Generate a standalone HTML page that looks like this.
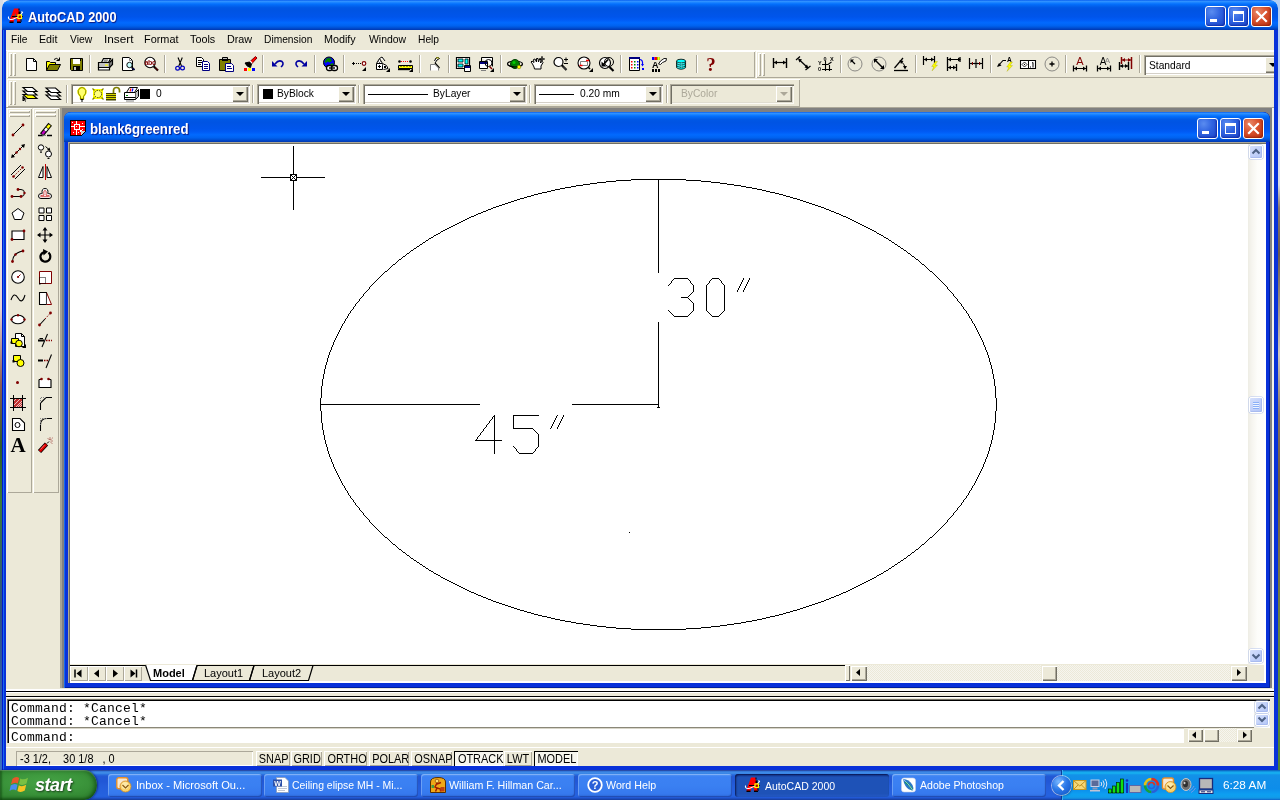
<!DOCTYPE html>
<html>
<head>
<meta charset="utf-8">
<title>AutoCAD 2000</title>
<style>
*{box-sizing:border-box;margin:0;padding:0}
html,body{width:1280px;height:800px;overflow:hidden}
body{position:relative;background:#9fb0c8;font-family:"Liberation Sans",sans-serif;font-size:11px;color:#000}
.abs{position:absolute}
/* desktop slivers */
#deskL{left:0;top:0;width:3px;height:770px;background:linear-gradient(to bottom,#d8dde6 0,#c9ced8 12%,#eef0f4 25%,#e6d3d6 40%,#8a5a52 50%,#2e5a2a 58%,#3c7a3a 65%,#2d4f8a 80%,#3a6ec0 100%)}
#deskR{left:1277px;top:0;width:3px;height:770px;background:linear-gradient(to bottom,#b3cef5 0,#b8d0f2 12%,#dfe4ee 16%,#d8dce4 24%,#8a7a70 27%,#6a5a50 33%,#a09488 40%,#cfc8c0 46%,#8a7460 54%,#6f5a42 62%,#7a7048 72%,#6a8440 82%,#5a8a3a 90%,#4f8236 100%)}
/* main window */
#win{left:2px;top:0;width:1276px;height:770px;background:#ece9d8;border-radius:8px 8px 0 0;overflow:hidden;will-change:transform}
#winframe{left:0;top:30px;width:1276px;height:740px;border:4px solid #0831d9;border-top:0;pointer-events:none}
#winframe:before{content:'';position:absolute;left:-4px;top:0;width:1px;height:740px;background:#0019cf}
#winframe:after{content:'';position:absolute;left:-3px;top:0;width:1274px;height:739px;border:1px solid #166aee;border-top:0;border-right-color:#0831d9;border-bottom-color:#0831d9;box-shadow:1px 1px 0 #00138c}
.tbar{background:linear-gradient(to bottom,#0058ee 0%,#3593ff 4%,#288eff 6%,#127dff 10%,#036ffc 14%,#0262ee 20%,#0057e5 26%,#0054e3 34%,#0055eb 56%,#005bf5 66%,#026afe 76%,#0062ef 86%,#0052d6 92%,#0044c4 96%,#0038b0 100%)}
#title{left:0;top:0;width:1276px;height:30px;border-radius:8px 8px 0 0}
.ttext{transform:scaleX(.91);transform-origin:0 0;color:#fff;font-weight:bold;font-size:14px;line-height:16px;text-shadow:1px 1px 1px #0a1883;white-space:nowrap}
.cbtn{width:21px;height:21px;border:1px solid #fff;border-radius:3px;background:radial-gradient(circle at 30% 25%,#5a8cf0 0,#2f63e0 45%,#1c45c8 100%);box-shadow:inset -1px -1px 2px rgba(0,20,140,.6)}
.cbtn.x{background:radial-gradient(circle at 30% 25%,#e8896a 0,#d8502c 45%,#b8300e 100%);box-shadow:inset -1px -1px 2px rgba(120,20,0,.6)}
#menubar{left:4px;top:30px;width:1268px;height:20px;background:#ece9d8}
.mi{top:33px;transform-origin:0 0;font-size:11px;white-space:nowrap}
.face{background:#ece9d8}
.tb{background:#ece9d8;box-shadow:inset 1px 1px 0 #fff,inset -1px -1px 0 #aca899}
.sep{width:2px;height:18px;border-left:1px solid #aca899;border-right:1px solid #fff}
.gripv{width:3px;height:22px;box-shadow:inset 1px 1px 0 #fff,inset -1px -1px 0 #aca899}
.griph{height:3px;width:22px;box-shadow:inset 1px 1px 0 #fff,inset -1px -1px 0 #aca899}
.combo{background:#fff;height:20px;box-shadow:inset 1px 1px 0 #aca899,inset 2px 2px 0 #716f64,inset -1px -1px 0 #fff,inset -2px -2px 0 #d4d0c8;font-size:11px;white-space:nowrap}
.combo.dis{background:#ece9d8;color:#aca899;box-shadow:inset 1px 1px 0 #aca899,inset 2px 2px 0 #716f64,inset -1px -1px 0 #fbfaf4,inset -2px -2px 0 #e0ddd0}
.dd{width:16px;height:16px;background:#ece9d8;box-shadow:inset 1px 1px 0 #fff,inset -1px -1px 0 #716f64,inset -2px -2px 0 #aca899}
.dd:after{content:"";position:absolute;left:4px;top:6px;border:4px solid transparent;border-top:4px solid #000;border-bottom:0}
.dd.dis:after{border-top-color:#aca899}
svg{position:absolute;overflow:visible}
.xsb{width:14px;height:14px;border:1px solid #fff;border-radius:2px;background:linear-gradient(135deg,#d6e0fb 0,#c3d2fa 50%,#b5c7f6 100%);box-shadow:0 0 0 0.5px #b4c4ee,inset -1px -1px 1px #a7baee}
.nb{width:18px;height:15px;background:#ece9d8;box-shadow:inset 1px 1px 0 #fff,inset -1px -1px 0 #aca899}
.cb{width:17px;height:16px;background:#ece9d8;box-shadow:inset 1px 1px 0 #ece9d8,inset 2px 2px 0 #fff,inset -1px -1px 0 #716f64,inset -2px -2px 0 #aca899}
.dith{background-color:#f6f5ef;background-image:linear-gradient(45deg,#ece9d8 25%,transparent 25%,transparent 75%,#ece9d8 75%),linear-gradient(45deg,#ece9d8 25%,transparent 25%,transparent 75%,#ece9d8 75%);background-size:2px 2px;background-position:0 0,1px 1px}
.cmd{font-family:"Liberation Mono",monospace;font-size:13px;line-height:13px;white-space:pre;letter-spacing:0.2px;transform:scaleX(1.0);transform-origin:0 0}
.st{font-size:13px;line-height:14px;white-space:nowrap;transform:scaleX(.84);transform-origin:0 0}
.sb{top:751px;height:15px;font-size:13px;line-height:16px;text-align:center;white-space:nowrap;box-shadow:inset 1px 1px 0 #fff,inset -1px -1px 0 #aca899}
.sb i{display:block;font-style:normal;transform:scaleX(.84)}
.sb.on{background:#f7f6ef;box-shadow:inset 1px 1px 0 #000,inset -1px -1px 0 #fff}
.tk{top:4px;width:154px;height:23px;border-radius:3px;background:linear-gradient(to bottom,#5a9af4 0,#3c81f3 12%,#3a80f2 50%,#3679ee 85%,#2f6fe0 100%);box-shadow:inset 1px 1px 0 rgba(255,255,255,.25),inset -1px -1px 1px rgba(0,0,80,.35);color:#fff;font-size:11px;line-height:22px;white-space:nowrap;overflow:hidden}
.tk span{position:absolute;left:28px;top:0;transform-origin:0 0}
.tk.act span{left:30px;top:1px}
.tk.act{background:linear-gradient(to bottom,#163c9c 0,#1e52b7 15%,#1e52b7 85%,#2459c4 100%);box-shadow:inset 1px 1px 2px rgba(0,0,40,.7)}
.xsb svg{left:-1px;top:-1px}
.ct{position:absolute;top:3px;transform:scaleX(.93);transform-origin:0 0}
.sw{position:absolute;top:5px;width:10px;height:10px;background:#000}
#mdi{left:58px;top:108px;width:1214px;height:580px;background:#808080}
</style>
</head>
<body>
<div class="abs" style="left:0;top:0;width:12px;height:12px;background:#e4e9f1"></div><div class="abs" style="left:1268px;top:0;width:12px;height:12px;background:#b3cef5"></div>
<div id="deskL" class="abs"></div>
<div id="deskR" class="abs"></div>

<div id="win" class="abs">
  <div id="title" class="abs tbar"></div>
  <svg style="left:6px;top:8px" width="16" height="16" viewBox="0 0 16 16">
    <path d="M6 .500H10.500L11 3.500L12 4V8L12.500 8.500V14.500H9V11H6.500L5.500 14.500H1.500L2.500 9.500L4 6Z" fill="#f00"/>
    <path d="M1.500 13.500H5.500V15H1.500ZM9 13.500H13V15H9ZM12.500 10V14H13.500V10ZM10.500 .500H11.500V2.500H10.500ZM10.500 3.500H12.500V6H10.500Z" fill="#000"/>
    <path d="M7.300 5L8 9H6.300Z" fill="#088"/>
    <path d="M4 8.500H15" stroke="#000" stroke-width="1"/>
    <path d="M.500 8.500Q0 11.500 3 11.500Q5 11.500 6.500 10.500Q9 9.500 10.500 9Q13 6.500 14.500 4.500L13.500 3.500" fill="none" stroke="#fff" stroke-width="1.100"/>
    <rect x="10" y="7" width="3.500" height="3.500" fill="#b00000" stroke="#ff0" stroke-width="1.200"/>
  </svg>
  <div class="abs ttext" style="left:26px;top:9px">AutoCAD 2000</div>
  <div class="abs cbtn" style="left:1203px;top:6px"><svg width="19" height="19" viewBox="0 0 19 19" shape-rendering="crispEdges"><rect x="4" y="12" width="7" height="3" fill="#fff"/></svg></div>
  <div class="abs cbtn" style="left:1226px;top:6px"><svg width="19" height="19" viewBox="0 0 19 19" shape-rendering="crispEdges"><path d="M4 4H15V15H4ZM5 7V14H14V7Z" fill="#fff" fill-rule="evenodd"/></svg></div>
  <div class="abs cbtn x" style="left:1249px;top:6px"><svg width="19" height="19" viewBox="0 0 19 19"><path d="M5 5L14 14M14 5L5 14" stroke="#fff" stroke-width="2.200" stroke-linecap="square"/></svg></div>
  <div id="menubar" class="abs"></div>

  <div class="abs mi" style="left:9px;transform:scaleX(0.93)">File</div>
  <div class="abs mi" style="left:37px;transform:scaleX(0.97)">Edit</div>
  <div class="abs mi" style="left:67.5px;transform:scaleX(0.94)">View</div>
  <div class="abs mi" style="left:101.5px;transform:scaleX(1.07)">Insert</div>
  <div class="abs mi" style="left:142px;transform:scaleX(0.99)">Format</div>
  <div class="abs mi" style="left:188px;transform:scaleX(0.98)">Tools</div>
  <div class="abs mi" style="left:225px;transform:scaleX(0.98)">Draw</div>
  <div class="abs mi" style="left:262px;transform:scaleX(0.93)">Dimension</div>
  <div class="abs mi" style="left:322px;transform:scaleX(0.98)">Modify</div>
  <div class="abs mi" style="left:367px;transform:scaleX(0.95)">Window</div>
  <div class="abs mi" style="left:416px;transform:scaleX(0.93)">Help</div>
  <div class="abs" style="left:4px;top:50px;width:1268px;height:1px;background:#fff"></div>
  <div class="abs tb" style="left:5px;top:51px;width:748px;height:27px"></div>
  <div class="abs gripv" style="left:7px;top:53px;height:23px"></div><div class="abs gripv" style="left:11px;top:53px;height:23px"></div>
  <svg style="left:20.5px;top:56px" width="16" height="16" viewBox="0 0 16 16"><path d="M3.500 2.500H10.500L13.500 5.500V14.500H3.500Z" fill="#fff" stroke="#000" stroke-width="1" /><path d="M10.500 2.500V5.500H13.500" fill="none" stroke="#000" stroke-width="1" /></svg>
  <svg style="left:42.5px;top:56px" width="16" height="16" viewBox="0 0 16 16"><path d="M1.500 14.500V5.500H4.500L5.500 6.500H10.500V8.500" fill="#ff0" stroke="#000" stroke-width="1" /><path d="M1.500 14.500L4.500 8.500H15.500L12.500 14.500Z" fill="#808000" stroke="#000" stroke-width="1" /><path d="M9 3.500Q11.500 1 14 4" fill="none" stroke="#000" stroke-width="1" /><path d="M14.500 1.500V4.500H11.500" fill="none" stroke="#000" stroke-width="1" /></svg>
  <svg style="left:66px;top:56px" width="16" height="16" viewBox="0 0 16 16"><path d="M2.500 2.500H14.500V14.500H3.500L2.500 13.500Z" fill="#808000" stroke="#000" stroke-width="1" /><rect x="5" y="3" width="7" height="5" fill="#fff"/><rect x="5" y="10" width="7" height="4" fill="#000"/><rect x="6" y="11" width="2" height="3" fill="#c0c0c0"/><rect x="12" y="3" width="1" height="2" fill="#000"/></svg>
  <div class="abs sep" style="left:87px;top:55px"></div>
  <svg style="left:95px;top:56px" width="16" height="16" viewBox="0 0 16 16"><path d="M4.500 6.500L6.500 2.500H13.500L11.500 6.500" fill="#fff" stroke="#000" stroke-width="1.2" /><path d="M1.500 6.500H12.500V11.500H1.500Z" fill="#c0c0c0" stroke="#000" stroke-width="1.2" /><path d="M12.500 6.500L15.500 3.500V8.500L12.500 11.500" fill="#808080" stroke="#000" stroke-width="1.2" /><path d="M1.500 11.500H12.500V14H1.500Z" fill="#fff" stroke="#000" stroke-width="1.2" /><rect x="8" y="8.5" width="3" height="1.2" fill="#ff0"/><path d="M7 4H11M6.500 5.200H10.500" fill="none" stroke="#000" stroke-width="0.6" /></svg>
  <svg style="left:118px;top:56px" width="16" height="16" viewBox="0 0 16 16"><path d="M2.500 1.500H9.500L12.500 4.500V14.500H2.500Z" fill="#fff" stroke="#000" stroke-width="1" /><path d="M9.500 1.500V4.500H12.500" fill="none" stroke="#808080" stroke-width="1" /><circle cx="9.500" cy="9" r="2.700" fill="#c8ffff" stroke="#000" stroke-width=".900"/><path d="M11.600 11.200L14.500 14" fill="none" stroke="#000" stroke-width="1.8" /><path d="M12.500 12L14.500 14" fill="none" stroke="#000080" stroke-width="1" /></svg>
  <svg style="left:140.5px;top:56px" width="16" height="16" viewBox="0 0 16 16"><circle cx="7" cy="6.500" r="5.200" fill="#fff" stroke="#000" stroke-width="1.100"/><text x="7" y="9" font-family="Liberation Sans" font-size="7" font-weight="bold" fill="#800000" text-anchor="middle" letter-spacing="-.4">abc</text><path d="M10.800 10.500L15 14.500" fill="none" stroke="#000" stroke-width="2.2" /><path d="M12 11.500L15 14.300" fill="none" stroke="#800000" stroke-width="1" /></svg>
  <div class="abs sep" style="left:162px;top:55px"></div>
  <svg style="left:169.5px;top:56px" width="16" height="16" viewBox="0 0 16 16"><path d="M6 1.500L9.500 10M10.300 1.500L6.800 10" fill="none" stroke="#000" stroke-width="1.1" /><circle cx="5.600" cy="12.300" r="1.900" fill="none" stroke="#0000c0" stroke-width="1.200"/><circle cx="10.500" cy="12" r="1.900" fill="none" stroke="#0000c0" stroke-width="1.200"/></svg>
  <svg style="left:192.5px;top:56px" width="16" height="16" viewBox="0 0 16 16"><path d="M1.500 1.500H6.500L8.500 3.500V10.500H1.500Z" fill="#fff" stroke="#000" stroke-width="1" /><path d="M3 4.500H7M3 6.500H7M3 8.500H6" fill="none" stroke="#000" stroke-width="1" /><path d="M7.500 5.500H12.500L14.500 7.500V14.500H7.500Z" fill="#fff" stroke="#000080" stroke-width="1" /><path d="M9 8.500H13M9 10.500H13M9 12.500H13" fill="none" stroke="#000080" stroke-width="1" /></svg>
  <svg style="left:215.5px;top:56px" width="16" height="16" viewBox="0 0 16 16"><path d="M1.500 3.500H12.500V14.500H1.500Z" fill="#808000" stroke="#000" stroke-width="1" /><path d="M4.500 3.500V1.500H9.500V3.500" fill="#c0c0c0" stroke="#000" stroke-width="1" /><rect x="4" y="3" width="6" height="2" fill="#000"/><path d="M7.500 7.500H13.500L15.500 9.500V15.500H7.500Z" fill="#fff" stroke="#000080" stroke-width="1" /><path d="M9 10.500H13M9 12.500H14" fill="none" stroke="#000080" stroke-width="1" /></svg>
  <svg style="left:239px;top:56px" width="16" height="16" viewBox="0 0 16 16"><path d="M14.500 .500L16 2L10.500 8L8.500 6Z" fill="#f00" stroke="#800000" stroke-width="1" /><path d="M9 5L11 7.500" fill="none" stroke="#fff" stroke-width="1.5" /><path d="M4 7L8.500 6L10.500 8L9.500 11.500Q6 11 4 7Z" fill="#000" stroke="#000" stroke-width="1" /><rect x="3" y="12" width="3" height="3" fill="#f00"/><rect x="7" y="12" width="3" height="3" fill="#ff0"/><rect x="11" y="12" width="3" height="3" fill="#00f"/></svg>
  <div class="abs sep" style="left:260px;top:55px"></div>
  <svg style="left:268px;top:56px" width="16" height="16" viewBox="0 0 16 16"><path d="M5 8Q8.500 3.500 12 5.500Q14.500 8 11 11" fill="none" stroke="#0000a0" stroke-width="1.6" /><path d="M2 5V10.500H7.500Z" fill="#0000a0" stroke="none" stroke-width="1" /></svg>
  <svg style="left:291px;top:56px" width="16" height="16" viewBox="0 0 16 16"><path d="M11 8Q7.500 3.500 4 5.500Q1.500 8 5 11" fill="none" stroke="#0000a0" stroke-width="1.6" /><path d="M14 5V10.500H8.500Z" fill="#0000a0" stroke="none" stroke-width="1" /></svg>
  <div class="abs sep" style="left:312px;top:55px"></div>
  <svg style="left:320px;top:56px" width="16" height="16" viewBox="0 0 16 16"><circle cx="7" cy="6.500" r="5.500" fill="#00f" stroke="#000"/><path d="M4 3Q6 1.500 9 2.500L10 5L7.500 6.500L5.500 5.500L4 7L2.500 6Z" fill="#008000" stroke="none" stroke-width="1" /><path d="M8 8L11 7L11.500 10L9 11.500Z" fill="#008000" stroke="none" stroke-width="1" /><rect x="4.500" y="9.500" width="6" height="5" rx="2.500" fill="#fff" stroke="#000" stroke-width="1.300"/><rect x="9.500" y="9.500" width="6" height="5" rx="2.500" fill="#fff" stroke="#000" stroke-width="1.300"/><path d="M7 12H13" fill="none" stroke="#000" stroke-width="1.4" /></svg>
  <div class="abs sep" style="left:341px;top:55px"></div>
  <svg style="left:349px;top:56px" width="16" height="16" viewBox="0 0 16 16"><path d="M1 7.500H4M2.500 6V9" fill="none" stroke="#000" stroke-width="1" /><path d="M5 7.500H11" fill="none" stroke="#000" stroke-width="1" stroke-dasharray="1 1"/><circle cx="13" cy="7.500" r="1.800" fill="#fff" stroke="#800000" stroke-width="1.200"/><path d="M15 11V15H11Z" fill="#000"/></svg>
  <svg style="left:372px;top:56px" width="16" height="16" viewBox="0 0 16 16"><path d="M2.500 7.500L5.500 2.500L8.500 7.500" fill="#fff" stroke="#000" stroke-width="1" /><path d="M5.500 2.500L8 1L11 5" fill="#fff" stroke="#000" stroke-width="1" /><path d="M2.500 7.500H8.500V13.500H2.500Z" fill="#fff" stroke="#000" stroke-width="1" /><path d="M8.500 7.500L12.500 9.500L14 12.500L9.500 13.500" fill="#fff" stroke="#000" stroke-width="1" /><path d="M4 10.500H7M5.500 9V12" fill="none" stroke="#000" stroke-width="1" /><path d="M10 10L12 12M12 10L10 12" fill="none" stroke="#000" stroke-width="1" /><path d="M4.500 5.500L5.500 6.500L6.500 5.500" fill="none" stroke="#000" stroke-width="0.8" /><path d="M16 12V16H12Z" fill="#000"/></svg>
  <svg style="left:395px;top:56px" width="16" height="16" viewBox="0 0 16 16"><circle cx="2.500" cy="5.500" r="1.300" fill="#000"/><circle cx="13.500" cy="5.500" r="1.300" fill="#000"/><path d="M4 5.500H12" fill="none" stroke="#f00" stroke-width="1" stroke-dasharray="1 1"/><path d="M1.500 9.500H15.500V12.500H1.500Z" fill="#ff0" stroke="#000" stroke-width="1" /><path d="M1 13.500H13" fill="none" stroke="#000" stroke-width="1.4" /><path d="M4 9.500V11M7 9.500V11M10 9.500V11M13 9.500V11" fill="none" stroke="#000" stroke-width="0.8" /><path d="M16 12V16H12Z" fill="#000"/></svg>
  <div class="abs sep" style="left:417px;top:55px"></div>
  <svg style="left:425px;top:56px" width="16" height="16" viewBox="0 0 16 16"><path d="M7.500 5L9 2L11 1.500L12.500 2.500L10 4L8 7" fill="#fff" stroke="#000" stroke-width="1" /><path d="M9 2L11 1.500L12 2.500" fill="#ff0" stroke="#808000" stroke-width="1" /><path d="M8 7L12.500 12" fill="none" stroke="#000" stroke-width="1.2" /><path d="M3.500 14.500V8.500H8L11.500 12V14.500" fill="#fff" stroke="#808080" stroke-width="1" /></svg>
  <div class="abs sep" style="left:446px;top:55px"></div>
  <svg style="left:452.5px;top:56px" width="16" height="16" viewBox="0 0 16 16"><path d="M1.500 1.500H14.500V12.500H1.500Z" fill="#fff" stroke="#000" stroke-width="1.2" /><rect x="3" y="3" width="5" height="3" fill="#0ff"/><rect x="3" y="8" width="5" height="3" fill="#0ff"/><rect x="10" y="3" width="3" height="5" fill="#0ff"/><path d="M3 3H8V6H3ZM3 8H8V11H3ZM10 3H13V8H10Z" fill="none" stroke="#000" stroke-width="0.8" /><path d="M9.500 9.500H15.500V15.500H9.500Z" fill="#fff" stroke="#000" stroke-width="1" /><rect x="10" y="10" width="5" height="2" fill="#000080"/></svg>
  <svg style="left:476px;top:56px" width="16" height="16" viewBox="0 0 16 16"><path d="M3.500 1.500H14.500V10.500" fill="#fff" stroke="#000" stroke-width="1" /><path d="M3.500 1.500V5" fill="none" stroke="#000" stroke-width="1" /><path d="M1.500 5.500H9.500V12.500H1.500Z" fill="#fff" stroke="#000" stroke-width="1" /><rect x="2" y="6" width="7" height="2" fill="#000080"/><circle cx="10.500" cy="7" r="3.500" fill="none" stroke="#000"/><path d="M3 14.500H8" fill="none" stroke="#808080" stroke-width="1" /><path d="M11.500 10.500L14 13" fill="none" stroke="#800000" stroke-width="1.4" /><path d="M16 12V16H12Z" fill="#000"/></svg>
  <div class="abs sep" style="left:498px;top:55px"></div>
  <svg style="left:505px;top:56px" width="16" height="16" viewBox="0 0 16 16"><ellipse cx="8" cy="8" rx="7.500" ry="2.800" fill="none" stroke="#000" stroke-width="1.200"/><circle cx="8" cy="8" r="4.500" fill="#008000" stroke="#004000"/><circle cx="7" cy="6.500" r="1.500" fill="#0c0"/><path d="M1 9Q8 13 15 9" fill="none" stroke="#000" stroke-width="1.2" /><circle cx="12" cy="11" r="1.800" fill="#ff0" stroke="#808000" stroke-width=".6"/></svg>
  <svg style="left:528px;top:56px" width="16" height="16" viewBox="0 0 16 16"><path d="M2.500 8L1 6L2 5L4 6.500L3.500 3.500L5 3L6.500 6L6.500 2.500L8 2.500L8.500 6L9.500 3L11 3.500L10.500 7L12 5.500L13 6.500L11 10L11 13H4.500L4 11Z" fill="#fff" stroke="#000" stroke-width="1" /><path d="M12 .500V5.500M9.500 3H14.500" fill="none" stroke="#000" stroke-width="1" /><path d="M12 0L11 1.500H13ZM12 6L11 4.500H13ZM9 3L10.500 2V4ZM15 3L13.500 2V4Z" fill="#000" stroke="none" stroke-width="1" /></svg>
  <svg style="left:551px;top:56px" width="16" height="16" viewBox="0 0 16 16"><circle cx="5.500" cy="6" r="4.500" fill="#fff" stroke="#000" stroke-width="1.200"/><path d="M8.800 9.300L13.500 14" fill="none" stroke="#000" stroke-width="2.2" /><path d="M10 10.500L13.300 13.800" fill="none" stroke="#808080" stroke-width="0.8" /><path d="M11 3.500H15M13 1.500V5.500M11 7.500H15" fill="none" stroke="#000" stroke-width="1" /></svg>
  <svg style="left:575px;top:56px" width="16" height="16" viewBox="0 0 16 16"><circle cx="7" cy="7" r="6" fill="#fff" stroke="#000" stroke-width="1.100"/><path d="M3.500 5.500H10.500V9.500H3.500Z" fill="none" stroke="#808080" stroke-width="1" /><path d="M2.500 9.500H5.500M9 4.500H12" fill="none" stroke="#f00" stroke-width="1.5" /><path d="M11.500 11.500L13 13" fill="none" stroke="#000" stroke-width="1.6" /><path d="M16 12V16H12Z" fill="#000"/></svg>
  <svg style="left:597px;top:56px" width="16" height="16" viewBox="0 0 16 16"><circle cx="6" cy="7" r="5.500" fill="#fff" stroke="#000" stroke-width="1.200"/><circle cx="10" cy="6" r="4.500" fill="none" stroke="#000" stroke-width="1"/><path d="M9 3.500L4 9" fill="none" stroke="#000" stroke-width="1.8" /><path d="M2.500 5.500V10.500H7.500Z" fill="#000" stroke="none" stroke-width="1" /><path d="M10.500 11L14.500 15" fill="none" stroke="#000" stroke-width="2.2" /></svg>
  <div class="abs sep" style="left:618px;top:55px"></div>
  <svg style="left:626px;top:56px" width="16" height="16" viewBox="0 0 16 16"><path d="M1.500 1.500H11.500V14.500H1.500Z" fill="#fff" stroke="#000" stroke-width="1" /><rect x="1" y="1" width="11" height="2" fill="#000080"/><rect x="3" y="5" width="1.5" height="1.5" fill="#f00"/><rect x="6" y="5" width="1.5" height="1.5" fill="#008000"/><rect x="9" y="5" width="1.5" height="1.5" fill="#00f"/><rect x="3" y="8" width="1.5" height="1.5" fill="#f00"/><rect x="6" y="8" width="1.5" height="1.5" fill="#008000"/><rect x="9" y="8" width="1.5" height="1.5" fill="#00f"/><rect x="3" y="11" width="1.5" height="1.5" fill="#f00"/><rect x="6" y="11" width="1.5" height="1.5" fill="#008000"/><rect x="9" y="11" width="1.5" height="1.5" fill="#00f"/><path d="M12 3.500Q15 4 14.500 8" fill="none" stroke="#00f" stroke-width="1.2" /><path d="M13 8H16L14.500 10.500Z" fill="#00f" stroke="none" stroke-width="1" /><rect x="14" y="12" width="2" height="2" fill="#00f"/></svg>
  <svg style="left:649px;top:56px" width="16" height="16" viewBox="0 0 16 16"><rect x="1" y="1" width="2.5" height="3" fill="#00f"/><rect x="3.5" y="1" width="2.5" height="3" fill="#f00"/><rect x="6" y="1" width="2.5" height="3" fill="#008000"/><rect x="6.5" y="1" width="2" height="3" fill="#ff0"/><text x="1" y="11.500" font-family="Liberation Sans" font-size="9" font-weight="bold" fill="#000">A</text><rect x="1" y="13" width="2" height="3" fill="#000"/><rect x="4" y="13" width="2" height="3" fill="#000"/><rect x="7" y="13" width="2" height="3" fill="#000"/><path d="M7.500 8L9.500 5L13 2.500L15.500 2.500L15 5L11.500 6.500L9.500 8.500Z" fill="#fff" stroke="#000" stroke-width="0.9" /></svg>
  <svg style="left:671px;top:56px" width="16" height="16" viewBox="0 0 16 16"><g transform="translate(1.500,1.800) scale(.82)"><path d="M2.500 4V12Q8 16 13.500 12V4" fill="#0ff" stroke="#000" stroke-width="1" /><ellipse cx="8" cy="4" rx="5.500" ry="2.300" fill="#0ff" stroke="#000"/><path d="M2.500 7Q8 11 13.500 7M2.500 9.700Q8 13.700 13.500 9.700" fill="none" stroke="#000" stroke-width="1" /><path d="M4 6.500H12M4 9H12M4 11.500H12" fill="none" stroke="#fff" stroke-width="0.8" stroke-dasharray="1 1"/></g></svg>
  <div class="abs sep" style="left:694px;top:55px"></div>
  <svg style="left:700.5px;top:56px" width="16" height="16" viewBox="0 0 16 16"><text x="8" y="15" font-family="Liberation Serif" font-size="19" font-weight="bold" fill="#800000" text-anchor="middle">?</text></svg>
  <div class="abs tb" style="left:754px;top:51px;width:520px;height:27px"></div>
  <div class="abs gripv" style="left:756px;top:53px;height:23px"></div><div class="abs gripv" style="left:760px;top:53px;height:23px"></div>
  <svg style="left:770px;top:56px" width="16" height="16" viewBox="0 0 16 16"><path d="M1.500 2V12M14.500 2V12" fill="none" stroke="#000" stroke-width="1.4" /><path d="M2 6.500H14" fill="none" stroke="#000" stroke-width="1.2" /><path d="M2 6.500L5 4.500V8.500ZM14 6.500L11 4.500V8.500Z" fill="#000" stroke="none" stroke-width="1" /></svg>
  <svg style="left:793px;top:56px" width="16" height="16" viewBox="0 0 16 16"><path d="M1 4L5 .500M10.500 14L15.500 10" fill="none" stroke="#000" stroke-width="1.2" /><path d="M4 3.500L12.500 11.500" fill="none" stroke="#000" stroke-width="1.3" /><path d="M3 2.500L7 3.500L4.500 6.500ZM13.500 12.500L9.500 11.500L12 8.500Z" fill="#000" stroke="none" stroke-width="1" /></svg>
  <svg style="left:816px;top:56px" width="16" height="16" viewBox="0 0 16 16"><text x="5.500" y="4.500" font-family="Liberation Sans" font-size="5.500" font-weight="bold" fill="#000">0</text><text x="12" y="4.500" font-family="Liberation Sans" font-size="5.500" font-weight="bold" fill="#000">X</text><text x="0" y="9" font-family="Liberation Sans" font-size="5.500" font-weight="bold" fill="#000">Y</text><text x="0" y="15" font-family="Liberation Sans" font-size="5.500" font-weight="bold" fill="#000">0</text><path d="M4 13.500H14M7.500 5V15M11.500 9V15M4 8.500H10L13.500 6" fill="none" stroke="#000" stroke-width="1.1" /></svg>
  <div class="abs sep" style="left:838px;top:55px"></div>
  <svg style="left:845px;top:56px" width="16" height="16" viewBox="0 0 16 16"><circle cx="8" cy="8" r="7" fill="none" stroke="#606060" stroke-width=".700"/><path d="M8 8L4.500 4.500" fill="none" stroke="#000" stroke-width="1.2" /><path d="M3.500 3.500H7L3.500 7Z" fill="#000" stroke="none" stroke-width="1" /></svg>
  <svg style="left:868.5px;top:56px" width="16" height="16" viewBox="0 0 16 16"><circle cx="8" cy="8" r="7" fill="none" stroke="#606060" stroke-width=".700"/><path d="M4.500 4.500L11.500 11.500" fill="none" stroke="#000" stroke-width="1.4" /><path d="M3 3H7L3 7ZM13 13H9L13 9Z" fill="#000" stroke="none" stroke-width="1" /></svg>
  <svg style="left:891px;top:56px" width="16" height="16" viewBox="0 0 16 16"><path d="M1 14.500H15" fill="none" stroke="#000" stroke-width="1.3" /><path d="M1.500 12L10 2" fill="none" stroke="#000" stroke-width="1.2" /><path d="M8 5.500Q12 8 12 12" fill="none" stroke="#000" stroke-width="1" /><path d="M6.500 4L10.500 5L8 8ZM12 13.500L10 10H14Z" fill="#000" stroke="none" stroke-width="1" /></svg>
  <div class="abs sep" style="left:913px;top:55px"></div>
  <svg style="left:920px;top:56px" width="16" height="16" viewBox="0 0 16 16"><path d="M1.500 0V9M12.500 0V7" fill="none" stroke="#000" stroke-width="1.2" /><path d="M2 3.500H12" fill="none" stroke="#000" stroke-width="1" /><path d="M2 3.500L5 1.500V5.500ZM12 3.500L9 1.500V5.500Z" fill="#000" stroke="none" stroke-width="1" /><g transform="translate(9,5.500) scale(.72)"><path d="M6 0L1 7H4L1.500 13L9 5H5.500L9 0Z" fill="#ff0" stroke="#a0a000" stroke-width=".500"/></g></svg>
  <svg style="left:943.5px;top:56px" width="16" height="16" viewBox="0 0 16 16"><path d="M1.500 1V15M10.500 8V15M14 1V6" fill="none" stroke="#000" stroke-width="1.3" /><path d="M2 3.500H14M2 11.500H10" fill="none" stroke="#000" stroke-width="1.1" /><path d="M2 3.500L5 1.500V5.500ZM15 3.500L12 1.500V5.500ZM2 11.500L5 9.500V13.500ZM10 11.500L7 9.500V13.500Z" fill="#000" stroke="none" stroke-width="1" /></svg>
  <svg style="left:966px;top:56px" width="16" height="16" viewBox="0 0 16 16"><path d="M1.500 2V13M8 3V12M14.500 2V13" fill="none" stroke="#000" stroke-width="1.2" /><path d="M2 7.500H14" fill="none" stroke="#000" stroke-width="1" /><path d="M4.500 6V9M11.500 6V9" fill="none" stroke="#800000" stroke-width="1" /><path d="M2 7.500L3.500 6.500V8.500ZM7.500 7.500L6 6.500V8.500ZM8.500 7.500L10 6.500V8.500ZM14 7.500L12.500 6.500V8.500Z" fill="#000" stroke="none" stroke-width="1" /></svg>
  <div class="abs sep" style="left:988px;top:55px"></div>
  <svg style="left:995px;top:56px" width="16" height="16" viewBox="0 0 16 16"><path d="M1 10L6 4.500H9" fill="none" stroke="#000" stroke-width="1.1" /><path d="M0 11L4.500 9.500L2 7Z" fill="#000" stroke="none" stroke-width="1" /><text x="10" y="5.500" font-family="Liberation Sans" font-size="6.500" font-weight="bold" fill="#000">A</text><g transform="translate(9,6) scale(.72)"><path d="M6 0L1 7H4L1.500 13L9 5H5.500L9 0Z" fill="#ff0" stroke="#a0a000" stroke-width=".500"/></g></svg>
  <svg style="left:1018px;top:56px" width="16" height="16" viewBox="0 0 16 16"><path d="M.500 4.500H15.500V12.500H.500Z" fill="#fff" stroke="#000" stroke-width="1.1" /><path d="M8.500 4.500V12.500" fill="none" stroke="#000" stroke-width="1" /><path d="M4.500 6L7 8.500L4.500 11L2 8.500Z" fill="none" stroke="#000" stroke-width="0.8" /><rect x="4" y="8" width="1" height="1" fill="#000"/><rect x="10" y="10.5" width="1" height="1" fill="#000"/><path d="M12 7L13 6.500V11.500" fill="none" stroke="#000" stroke-width="1" /></svg>
  <svg style="left:1041.5px;top:56px" width="16" height="16" viewBox="0 0 16 16"><circle cx="8" cy="8" r="7" fill="none" stroke="#606060" stroke-width=".700"/><path d="M5.500 8H10.500M8 5.500V10.500" fill="none" stroke="#000" stroke-width="1.3" /></svg>
  <div class="abs sep" style="left:1063px;top:55px"></div>
  <svg style="left:1070px;top:56px" width="16" height="16" viewBox="0 0 16 16"><text x="8" y="9" font-family="Liberation Sans" font-size="11" fill="#800000" text-anchor="middle">A</text><path d="M1.500 9.500V15.500M14.500 9.500V15.500" fill="none" stroke="#000" stroke-width="1.3" /><path d="M2 12.500H14" fill="none" stroke="#000" stroke-width="1.1" /><path d="M2 12.500L5 10.500V14.500ZM14 12.500L11 10.500V14.500Z" fill="#000" stroke="none" stroke-width="1" /></svg>
  <svg style="left:1093.5px;top:56px" width="16" height="16" viewBox="0 0 16 16"><text x="7" y="9" font-family="Liberation Sans" font-size="10" fill="#000" text-anchor="middle">A</text><text x="11.500" y="7" font-family="Liberation Sans" font-size="8" fill="#808080" text-anchor="middle">A</text><path d="M1.500 9.500V15.500M14.500 9.500V15.500" fill="none" stroke="#000" stroke-width="1.3" /><path d="M2 12.500H14" fill="none" stroke="#000" stroke-width="1.1" /><path d="M2 12.500L5 10.500V14.500ZM14 12.500L11 10.500V14.500Z" fill="#000" stroke="none" stroke-width="1" /></svg>
  <svg style="left:1116px;top:56px" width="16" height="16" viewBox="0 0 16 16"><path d="M1.500 6V14M10.500 6V14" fill="none" stroke="#000" stroke-width="1.4" /><path d="M2 10H10" fill="none" stroke="#000" stroke-width="1" /><path d="M2 10L5 8V12ZM10 10L7 8V12Z" fill="#000" stroke="none" stroke-width="1" /><path d="M3.500 1V8M13.500 1V13" fill="none" stroke="#800000" stroke-width="1.5" /><path d="M4 4H13" fill="none" stroke="#800000" stroke-width="1.1" /><path d="M4 4L7 2V6ZM13 4L10 2V6Z" fill="#800000" stroke="none" stroke-width="1" /></svg>
  <div class="abs sep" style="left:1137px;top:55px"></div>
  <div class="abs combo" style="left:1142px;top:55px;width:140px;height:20px"><span class="ct" style="left:5px;top:4px">Standard</span></div>
  <div class="abs dd" style="left:1263px;top:57px;height:16px"></div>
  <div class="abs tb" style="left:5px;top:79px;width:793px;height:28px"></div>
  <div class="abs gripv" style="left:7px;top:81px;height:24px"></div><div class="abs gripv" style="left:11px;top:81px;height:24px"></div>
  <svg style="left:20px;top:86px" width="16" height="16" viewBox="0 0 16 16"><path d="M1 8.500H10.500L15 12.500H5.500Z" fill="#ff0" stroke="#000" stroke-width="1.1" /><path d="M1 5H10.500L15 9H5.500Z" fill="#fff" stroke="#000" stroke-width="1.1" /><path d="M1 1.500H10.500L15 5.500H5.500Z" fill="#fff" stroke="#000" stroke-width="1.1" /><path d="M1 10V15L2.500 13.500L3.500 15.500" fill="none" stroke="#000" stroke-width="1" /><path d="M1 10L4.500 13.500H1Z" fill="#000" stroke="none" stroke-width="1" /></svg>
  <svg style="left:43px;top:86px" width="16" height="16" viewBox="0 0 16 16"><path d="M1 9H10.500L15.500 13.500H6Z" fill="#fff" stroke="#000" stroke-width="1.1" /><path d="M1 5.500H10.500L15.500 10H6Z" fill="#fff" stroke="#000" stroke-width="1.1" /><path d="M1 2H10.500L15.500 6.500H6Z" fill="#fff" stroke="#000" stroke-width="1.1" /></svg>
  <div class="abs sep" style="left:64px;top:85px"></div>
  <div class="abs combo" style="left:69px;top:84px;width:179px;height:20px"><span class="ct" style="left:85px">0</span><span class="sw" style="left:69px"></span></div>
  <div class="abs dd" style="left:230px;top:86px"></div>
  <svg style="left:72px;top:86px" width="16" height="16" viewBox="0 0 16 16"><path d="M6.500 10.500Q3.500 7.500 4.200 4.500Q5.500 1.500 8 1.500Q10.500 1.500 11.800 4.500Q12.500 7.500 9.500 10.500V12.500H6.500Z" fill="#ffff70" stroke="#ff0" stroke-width="1.6" /><path d="M6.500 10.500Q3.500 7.500 4.200 4.500Q5.500 1.500 8 1.500Q10.500 1.500 11.800 4.500Q12.500 7.500 9.500 10.500V13H6.500Z" fill="none" stroke="#404000" stroke-width="0.6" /><path d="M6.500 13.500H9.500M7 15H9" fill="none" stroke="#000" stroke-width="1.1" /></svg>
  <svg style="left:87.5px;top:86px" width="16" height="16" viewBox="0 0 16 16"><rect x="3" y="3" width="10" height="10" fill="#ff0"/><circle cx="8" cy="8" r="3.600" fill="#ffff80" stroke="#404000" stroke-width="1" stroke-dasharray="1.5 1"/><path d="M2.500 2.500L4.500 4.500M11.500 11.500L13.500 13.500M13.500 2.500L11.500 4.500M4.500 11.500L2.500 13.500" fill="none" stroke="#808000" stroke-width="1.2" /></svg>
  <svg style="left:103px;top:86px" width="16" height="16" viewBox="0 0 16 16"><path d="M8.500 7V4.500Q8.500 1.500 11.500 1.500Q14.500 1.500 14.500 4.500V6.500" fill="none" stroke="#808000" stroke-width="1.7" /><rect x="1" y="7" width="10" height="7.5" fill="#404000"/><path d="M1 8.500H11M1 10.500H11M1 12.500H11" fill="none" stroke="#d8d800" stroke-width="1" /></svg>
  <svg style="left:121px;top:86px" width="16" height="16" viewBox="0 0 16 16"><path d="M3.500 6.500L6.500 1.500H14.500L11.500 6.500" fill="#fff" stroke="#000" stroke-width="1" /><path d="M1.500 6.500H12.500V13.500H1.500Z" fill="#fff" stroke="#000" stroke-width="1" /><path d="M12.500 6.500L15.500 3.500V10.500L12.500 13.500" fill="#c0c0c0" stroke="#000" stroke-width="1" /><path d="M8 2.500L7 5.500" fill="none" stroke="#f00" stroke-width="1.2" /><path d="M10 2.500L9 5.500" fill="none" stroke="#00f" stroke-width="1.2" /><path d="M1.500 11.500H12.500" fill="none" stroke="#000" stroke-width="1" /><rect x="3" y="9" width="2" height="1" fill="#008000"/><path d="M3 15H11" fill="none" stroke="#808080" stroke-width="1" /></svg>
  <div class="abs sep" style="left:250px;top:85px"></div>
  <div class="abs combo" style="left:255px;top:84px;width:99px;height:20px"><span class="sw" style="left:6px"></span><span class="ct" style="left:20px">ByBlock</span></div>
  <div class="abs dd" style="left:336px;top:86px"></div>
  <div class="abs sep" style="left:356px;top:85px"></div>
  <div class="abs combo" style="left:361px;top:84px;width:164px;height:20px"><span style="position:absolute;left:5px;top:10px;width:60px;height:1px;background:#000"></span><span class="ct" style="left:70px">ByLayer</span></div>
  <div class="abs dd" style="left:507px;top:86px"></div>
  <div class="abs sep" style="left:527px;top:85px"></div>
  <div class="abs combo" style="left:532px;top:84px;width:129px;height:20px"><span style="position:absolute;left:5px;top:10px;width:35px;height:1px;background:#000"></span><span class="ct" style="left:46px">0.20 mm</span></div>
  <div class="abs dd" style="left:643px;top:86px"></div>
  <div class="abs sep" style="left:664px;top:85px"></div>
  <div class="abs combo dis" style="left:668px;top:84px;width:124px;height:20px"><span class="ct" style="left:11px">ByColor</span></div>
  <div class="abs dd dis" style="left:774px;top:86px"></div>
  <div class="abs" style="left:4px;top:107px;width:1268px;height:1px;background:#aca899"></div>
  <div class="abs tb" style="left:5px;top:108px;width:25px;height:385px"></div>
  <div class="abs tb" style="left:31px;top:108px;width:26px;height:385px"></div>
  <div class="abs griph" style="left:7px;top:110px;width:21px"></div><div class="abs griph" style="left:7px;top:114px;width:21px"></div>
  <div class="abs griph" style="left:33px;top:110px;width:21px"></div><div class="abs griph" style="left:33px;top:114px;width:21px"></div>
  <svg style="left:7.5px;top:121.5px" width="16" height="16" viewBox="0 0 16 16"><path d="M3 13L13 3" fill="none" stroke="#000" stroke-width="1.0" /><circle cx="3" cy="13" r="1.4" fill="#800000"/><circle cx="13" cy="3" r="1.4" fill="#800000"/></svg>
  <svg style="left:35px;top:121.5px" width="16" height="16" viewBox="0 0 16 16"><path d="M1 13.500H6M10 13.500H15" fill="none" stroke="#000" stroke-width="1.312" /><path d="M4.800 12.800L13.200 2.200" fill="none" stroke="#000" stroke-width="4.6" /><path d="M5.300 12L7.800 9" fill="none" stroke="#c000c0" stroke-width="2.6" /><path d="M8 8.700L10 6.200" fill="none" stroke="#fff" stroke-width="2.6" /><path d="M10.300 5.800L12.700 3" fill="none" stroke="#ff0" stroke-width="2.6" /><path d="M5 13L9 13.500" fill="none" stroke="#808080" stroke-width="1.0" /></svg>
  <svg style="left:7.5px;top:142.5px" width="16" height="16" viewBox="0 0 16 16"><path d="M2 14L14 2" fill="none" stroke="#000" stroke-width="1.0" /><path d="M1 15L2 11L5 14ZM15 1L14 5L11 2Z" fill="#000" stroke="none" stroke-width="1" /><circle cx="6.5" cy="9.5" r="1.2" fill="#800000"/><circle cx="10" cy="6" r="1.2" fill="#800000"/></svg>
  <svg style="left:35px;top:142.5px" width="16" height="16" viewBox="0 0 16 16"><circle cx="4" cy="4.500" r="2.700" fill="#fff" stroke="#000" stroke-width="1.000"/><circle cx="11.500" cy="11" r="3" fill="#fff" stroke="#000" stroke-width="1.000"/><path d="M8.500 3.500L12 6.500" fill="none" stroke="#000" stroke-width="1.0" /><path d="M13.500 8L10 7L12.500 4.500Z" fill="#000" stroke="none" stroke-width="1" /><rect x="3" y="8.5" width="2" height="1.2" fill="#000"/><rect x="10.5" y="15" width="2" height="1" fill="#000"/></svg>
  <svg style="left:7.5px;top:163.5px" width="16" height="16" viewBox="0 0 16 16"><path d="M1 11L11 1M5 15L15 5" fill="none" stroke="#000" stroke-width="1.0" /><path d="M3.500 12.500L12.500 3.500" fill="none" stroke="#800000" stroke-width="1.0" stroke-dasharray="1.5 1.5"/><circle cx="3.5" cy="12.5" r="1.3" fill="#800000"/><circle cx="12.5" cy="3.5" r="1.3" fill="#800000"/></svg>
  <svg style="left:35px;top:163.5px" width="16" height="16" viewBox="0 0 16 16"><path d="M6 13.500V2.500L1.500 13.500Z" fill="#fff" stroke="#000" stroke-width="1.0" /><path d="M10 13.500V2.500L14.500 13.500Z" fill="#fff" stroke="#000" stroke-width="1.0" /><rect x="8" y="0" width="1" height="16" fill="#c00000"/></svg>
  <svg style="left:7.5px;top:184.5px" width="16" height="16" viewBox="0 0 16 16"><path d="M2 11.500H11Q14.500 11.500 14.500 8Q14.500 4.500 11 4.500H8" fill="none" stroke="#000" stroke-width="1.0" /><circle cx="2" cy="11.5" r="1.4" fill="#800000"/><circle cx="11" cy="11.5" r="1.4" fill="#800000"/><circle cx="8" cy="4.5" r="1.4" fill="#800000"/><circle cx="14.5" cy="8" r="1.2" fill="#800000"/></svg>
  <svg style="left:35px;top:184.5px" width="16" height="16" viewBox="0 0 16 16"><path d="M1.500 11Q1.500 8.500 4.500 8.500H5.200Q4.300 3.500 8 3.500Q11.700 3.500 10.800 8.500H11.500Q14.500 8.500 14.500 11Q14.500 13.500 12 13.500H4Q1.500 13.500 1.500 11Z" fill="#fff" stroke="#000" stroke-width="1.0" /><path d="M3.500 11Q3.500 10.300 5 10.300H7Q6.300 5.500 8 5.500Q9.700 5.500 9 10.300H11Q12.500 10.300 12.500 11Q12.500 11.700 11.500 11.700H4.500Q3.500 11.700 3.500 11Z" fill="#fff" stroke="#c00000" stroke-width="0.7" /></svg>
  <svg style="left:7.5px;top:205.5px" width="16" height="16" viewBox="0 0 16 16"><path d="M8 2.500L14 7L11.500 13.500H4.500L2 7Z" fill="#fff" stroke="#000" stroke-width="1.0" /></svg>
  <svg style="left:35px;top:205.5px" width="16" height="16" viewBox="0 0 16 16"><path d="M2 2H7V7H2ZM9.500 2H14.500V7H9.500ZM2 9.500H7V14.500H2ZM9.500 9.500H14.500V14.500H9.500Z" fill="#fff" stroke="#000" stroke-width="1.0" /></svg>
  <svg style="left:7.5px;top:227px" width="16" height="16" viewBox="0 0 16 16"><path d="M2 4H14V12.500H2Z" fill="#fff" stroke="#000" stroke-width="1.148" /><circle cx="2" cy="12.5" r="1.4" fill="#800000"/><circle cx="14" cy="4" r="1.4" fill="#800000"/></svg>
  <svg style="left:35px;top:227px" width="16" height="16" viewBox="0 0 16 16"><path d="M8 1.500V14.500M1.500 8H14.500" fill="none" stroke="#000" stroke-width="1.23" /><path d="M8 0L5.500 3.500H10.500ZM8 16L5.500 12.500H10.500ZM0 8L3.500 5.500V10.500ZM16 8L12.500 5.500V10.500Z" fill="#000" stroke="none" stroke-width="1" /></svg>
  <svg style="left:7.5px;top:248px" width="16" height="16" viewBox="0 0 16 16"><path d="M2.500 13Q3 5 13 3" fill="none" stroke="#000" stroke-width="1.066" /><circle cx="2.5" cy="13.5" r="1.4" fill="#800000"/><circle cx="13" cy="3" r="1.4" fill="#800000"/><circle cx="5.5" cy="6.5" r="1.2" fill="#800000"/></svg>
  <svg style="left:35px;top:248px" width="16" height="16" viewBox="0 0 16 16"><path d="M11.500 4.500Q14 7 13 10.500Q11 14.500 7 13.500Q3 12 3.500 8Q4 5 7.500 4" fill="none" stroke="#000" stroke-width="2.2" /><path d="M6 1L11 3.500L6.500 7.500Z" fill="#000" stroke="none" stroke-width="1" /></svg>
  <svg style="left:7.5px;top:269px" width="16" height="16" viewBox="0 0 16 16"><circle cx="8" cy="8" r="6.300" fill="#fff" stroke="#000" stroke-width="1.066"/><path d="M8 8L10.500 5.500" fill="none" stroke="#800000" stroke-width="1.0" /><circle cx="8" cy="8" r="1.1" fill="#800000"/></svg>
  <svg style="left:35px;top:269px" width="16" height="16" viewBox="0 0 16 16"><path d="M2.500 2.500H14.500V14.500H2.500Z" fill="#fff" stroke="#800000" stroke-width="1.0" /><path d="M2.500 8.500H8.500V14.500H2.500Z" fill="none" stroke="#000" stroke-width="1.0" stroke-dasharray="1 1"/><rect x="2" y="14" width="1.5" height="1.5" fill="#000"/></svg>
  <svg style="left:7.5px;top:290px" width="16" height="16" viewBox="0 0 16 16"><path d="M1 10Q4 1 8 8Q12 15 15 5" fill="none" stroke="#000" stroke-width="1.066" /></svg>
  <svg style="left:35px;top:290px" width="16" height="16" viewBox="0 0 16 16"><path d="M2.500 2.500H9.500V14.500H2.500Z" fill="#fff" stroke="#000" stroke-width="1.066" /><path d="M9.500 2.500L14.500 14.500H9.500" fill="#fff" stroke="#800000" stroke-width="1.0" /><path d="M9.500 2.500V14.500" fill="none" stroke="#000" stroke-width="1.0" stroke-dasharray="1 1"/></svg>
  <svg style="left:7.5px;top:311px" width="16" height="16" viewBox="0 0 16 16"><ellipse cx="8" cy="8.500" rx="6.500" ry="4.300" fill="#fff" stroke="#000" stroke-width="1.066"/><circle cx="1.5" cy="8.5" r="1.2" fill="#800000"/><circle cx="8" cy="4.2" r="1.2" fill="#800000"/><circle cx="14.5" cy="8.5" r="1.2" fill="#800000"/></svg>
  <svg style="left:35px;top:311px" width="16" height="16" viewBox="0 0 16 16"><path d="M2.500 14L8 8" fill="none" stroke="#000" stroke-width="1.066" /><path d="M8 8L13.500 2" fill="none" stroke="#800000" stroke-width="1.0" stroke-dasharray="1.5 1.5"/><circle cx="2.5" cy="14" r="1.4" fill="#800000"/><circle cx="13.5" cy="2" r="1.4" fill="#800000"/></svg>
  <svg style="left:7.5px;top:332px" width="16" height="16" viewBox="0 0 16 16"><path d="M5.500 1.500H11.500L14.500 4.500V14.500H5.500Z" fill="#fff" stroke="#000" stroke-width="1" /><path d="M11.500 1.500V4.500H14.500" fill="none" stroke="#000" stroke-width="1" /><path d="M1.500 6.500H8.500V11.500H1.500Z" fill="#ff0" stroke="#000" stroke-width="1.0" /><circle cx="9" cy="11.500" r="3.300" fill="#ff0" stroke="#000" stroke-width="1.000"/><rect x="0.5" y="9.5" width="2" height="2" fill="#000"/><path d="M16 12V16H12Z" fill="#000"/></svg>
  <svg style="left:35px;top:332px" width="16" height="16" viewBox="0 0 16 16"><path d="M1 8.500H7" fill="none" stroke="#000" stroke-width="2.0" /><path d="M9 8.500H15" fill="none" stroke="#800000" stroke-width="1.312" stroke-dasharray="1.5 1"/><path d="M10.500 2L5 15" fill="none" stroke="#000" stroke-width="1.066" /><path d="M2.500 6.500H6" fill="none" stroke="#000" stroke-width="1.0" /></svg>
  <svg style="left:7.5px;top:353px" width="16" height="16" viewBox="0 0 16 16"><path d="M3.500 2.500H10.500V8.500H3.500Z" fill="#ff0" stroke="#000" stroke-width="1.0" /><circle cx="10.500" cy="10" r="3.500" fill="#ff0" stroke="#000" stroke-width="1.000"/><rect x="2.5" y="7" width="2" height="2.5" fill="#000"/></svg>
  <svg style="left:35px;top:353px" width="16" height="16" viewBox="0 0 16 16"><path d="M1 7.500H6" fill="none" stroke="#000" stroke-width="2.0" /><path d="M7 7.500H11" fill="none" stroke="#800000" stroke-width="1.312" stroke-dasharray="1.5 1"/><path d="M14.500 1.500L9 15" fill="none" stroke="#000" stroke-width="1.066" /></svg>
  <svg style="left:7.5px;top:374px" width="16" height="16" viewBox="0 0 16 16"><circle cx="7.5" cy="8.5" r="1.5" fill="#800000"/></svg>
  <svg style="left:35px;top:374px" width="16" height="16" viewBox="0 0 16 16"><path d="M2 5.500V13.500H14V5.500" fill="#fff" stroke="#000" stroke-width="1.148" /><path d="M2 5.500H4M12 5.500H14" fill="none" stroke="#000" stroke-width="1.148" /><circle cx="4.5" cy="5" r="1.3" fill="#800000"/><circle cx="11.5" cy="5" r="1.3" fill="#800000"/></svg>
  <svg style="left:7.5px;top:395px" width="16" height="16" viewBox="0 0 16 16"><rect x="3" y="3" width="10" height="10" fill="#c03030"/><path d="M3 7L7 3M3 11L11 3M5 13L13 5M9 13L13 9M3 5L5 3M7 13L13 7" fill="none" stroke="#fff" stroke-width="0.7" /><path d="M3.500 0V16M12.500 0V16M0 3.500H16M0 12.500H16" fill="none" stroke="#000" stroke-width="1.0" /></svg>
  <svg style="left:35px;top:395px" width="16" height="16" viewBox="0 0 16 16"><path d="M3.500 15V8L9 2.500H15" fill="none" stroke="#000" stroke-width="1.066" /><path d="M3.500 8V2.500H9" fill="none" stroke="#808080" stroke-width="1.0" stroke-dasharray="1 1"/></svg>
  <svg style="left:7.5px;top:416px" width="16" height="16" viewBox="0 0 16 16"><path d="M2.500 2.500H10L14.500 7V14.500H2.500Z" fill="#fff" stroke="#000" stroke-width="1.066" /><circle cx="7.500" cy="9" r="2.500" fill="#fff" stroke="#000" stroke-width="1.000"/></svg>
  <svg style="left:35px;top:416px" width="16" height="16" viewBox="0 0 16 16"><path d="M3.500 15V9Q3.500 2.500 10 2.500H15" fill="none" stroke="#000" stroke-width="1.066" /><path d="M3.500 9V2.500H10" fill="none" stroke="#808080" stroke-width="1.0" stroke-dasharray="1 1"/></svg>
  <svg style="left:7.5px;top:437px" width="16" height="16" viewBox="0 0 16 16"><text x="8" y="15" font-family="Liberation Serif" font-size="21" font-weight="bold" fill="#000" text-anchor="middle">A</text></svg>
  <svg style="left:35px;top:437px" width="16" height="16" viewBox="0 0 16 16"><path d="M2.500 14.500L9.500 7" fill="none" stroke="#000" stroke-width="4.4" /><path d="M2.800 14.200L9.200 7.300" fill="none" stroke="#e00000" stroke-width="2.8" /><path d="M3.500 12.500L7.500 8" fill="none" stroke="#ff8080" stroke-width="0.8" /><path d="M10 6.500L12 4.500" fill="none" stroke="#000" stroke-width="1.0" /><path d="M13 .500V3M15.500 4H13.500M11 1.500L12.500 3M15.500 1L14 2.500M14 5.500L15.500 7" fill="none" stroke="#800000" stroke-width="0.9" stroke-dasharray="1 .7"/></svg>
  <div id="mdi" class="abs"></div>
  <div class="abs" style="left:1270px;top:108px;width:2px;height:581px;background:#f4f2e8"></div>
  <div class="abs" style="left:58px;top:108px;width:2px;height:580px;background:#a5a294"></div>

  <!-- child window: x 64..1270 (win-relative 62..1268), y 112..688 -->
  <div class="abs" id="child" style="left:62px;top:112px;width:1206px;height:576px;background:#0831d9;border-radius:7px 7px 0 0;overflow:hidden;box-shadow:inset 1px 0 0 #166aee,inset -1px 0 0 #001ea0,inset 0 -1px 0 #001ea0">
    <div class="abs tbar" style="left:0;top:0;width:1206px;height:30px;border-radius:7px 7px 0 0"></div>
    <!-- doc icon -->
    <svg style="left:6px;top:8px" width="16" height="16" viewBox="0 0 16 16" shape-rendering="crispEdges">
      <path d="M0 0H16V11L11 16H0Z" fill="#000"/>
      <path d="M1 1H15V11L11 15H1Z" fill="#f00"/>
      <path d="M11 15V11H15Z" fill="#d0d0d0"/>
      <path d="M6 1H7V15H6ZM1 6H15V7H1Z" fill="#fff"/>
      <path d="M4 4H10V10H4ZM5 5V9H9V5Z" fill="#fff" fill-rule="evenodd"/>
      <rect x="5" y="5" width="4" height="4" fill="#f00"/><rect x="6" y="6" width="1" height="1" fill="#fff"/>
      <path d="M10 10H11V12H10ZM10 10H12V11H10Z" fill="#fff"/>
      <rect x="12" y="3" width="1" height="1" fill="#fff"/><rect x="12" y="9" width="1" height="1" fill="#fff"/><rect x="3" y="12" width="1" height="1" fill="#fff"/><rect x="8" y="12" width="1" height="1" fill="#fff"/><rect x="2" y="2" width="1" height="1" fill="#fff"/>
    </svg>
    <div class="abs ttext" style="left:26px;top:9px;transform:scaleX(.945)">blank6greenred</div>
    <div class="abs cbtn" style="left:1133px;top:6px"><svg width="19" height="19" viewBox="0 0 19 19" shape-rendering="crispEdges"><rect x="4" y="12" width="7" height="3" fill="#fff"/></svg></div>
    <div class="abs cbtn" style="left:1156px;top:6px"><svg width="19" height="19" viewBox="0 0 19 19" shape-rendering="crispEdges"><path d="M4 4H15V15H4ZM5 7V14H14V7Z" fill="#fff" fill-rule="evenodd"/></svg></div>
    <div class="abs cbtn x" style="left:1179px;top:6px"><svg width="19" height="19" viewBox="0 0 19 19"><path d="M5 5L14 14M14 5L5 14" stroke="#fff" stroke-width="2.200" stroke-linecap="square"/></svg></div>
    <!-- client -->
    <div class="abs" id="client" style="left:4px;top:30px;width:1198px;height:541px;background:#ece9d8;box-shadow:inset 1px 1px 0 #aca899,inset 2px 2px 0 #716f64,inset -1px -1px 0 #fff,inset -2px -2px 0 #fff"></div>
    <!-- vertical scrollbar (XP themed) -->
    <div class="abs" style="left:1184px;top:32px;width:16px;height:521px;background:linear-gradient(to right,#eeede5 0,#f6f5ef 25%,#fdfdfa 60%,#fefefb 100%)"></div>
    <div class="abs xsb" style="left:1185px;top:33px"><svg width="14" height="14" viewBox="0 0 14 14"><path d="M3.500 8.500L7 5L10.500 8.500" fill="none" stroke="#4d6185" stroke-width="2"/></svg></div>
    <div class="abs xsb" style="left:1185px;top:537px"><svg width="14" height="14" viewBox="0 0 14 14"><path d="M3.500 5.500L7 9L10.500 5.500" fill="none" stroke="#4d6185" stroke-width="2"/></svg></div>
    <div class="abs xsb" style="left:1185px;top:285px;height:16px"><svg width="14" height="16" viewBox="0 0 14 16"><path d="M4 5.500H10M4 7.500H10M4 9.500H10M4 11.500H10" stroke="#8cb0f8" stroke-width="1" shape-rendering="crispEdges"/><path d="M4 6.500H10M4 8.500H10M4 10.500H10" stroke="#eef4fe" stroke-width="1" shape-rendering="crispEdges"/></svg></div>
    <!-- bottom row -->
    <div class="abs" style="left:6px;top:553px;width:1194px;height:16px;background:#ece9d8"></div>
    <div class="abs" style="left:6px;top:553px;width:775px;height:1px;background:#000"></div>
    <!-- nav buttons -->
    <div class="abs nb" style="left:6px;top:554px"><svg width="18" height="15" viewBox="0 0 18 15"><path d="M5 3.500V11.500" stroke="#000" stroke-width="1.500"/><path d="M11.500 3.500V11.500L6.500 7.500Z" fill="#000"/></svg></div>
    <div class="abs nb" style="left:24px;top:554px"><svg width="18" height="15" viewBox="0 0 18 15"><path d="M11 3.500V11.500L6 7.500Z" fill="#000"/></svg></div>
    <div class="abs nb" style="left:42px;top:554px"><svg width="18" height="15" viewBox="0 0 18 15"><path d="M7 3.500V11.500L12 7.500Z" fill="#000"/></svg></div>
    <div class="abs nb" style="left:60px;top:554px"><svg width="18" height="15" viewBox="0 0 18 15"><path d="M12.500 3.500V11.500" stroke="#000" stroke-width="1.500"/><path d="M6.500 3.500V11.500L11.500 7.500Z" fill="#000"/></svg></div>
    <!-- tabs: page coords minus 64 / 112 -->
    <svg style="left:0;top:0" width="400" height="576" viewBox="0 0 400 576">
      <path d="M81 553L86 568.500H128L133 553Z" fill="#fff"/>
      <path d="M81.500 553L86.500 568.500H128.500L133 553.500" fill="none" stroke="#000" stroke-width="1.200"/>
      <path d="M133 553.500L128.500 568.500H185.500L190 553.500" fill="none" stroke="#000" stroke-width="1.200"/>
      <path d="M190 553.500L185.500 568.500H244.500L249 553.500" fill="none" stroke="#000" stroke-width="1.200"/>
    </svg>
    <div class="abs" style="left:89px;top:555px;font-size:11px;font-weight:bold;letter-spacing:0">Model</div>
    <div class="abs" style="left:140px;top:555px;font-size:11px">Layout1</div>
    <div class="abs" style="left:198px;top:555px;font-size:11px">Layout2</div>
    <!-- h scrollbar (classic) page x 845..1247 -> child 781..1183 -->
    <div class="abs" style="left:781px;top:553px;width:5px;height:16px;background:#ece9d8;box-shadow:inset 1px 1px 0 #fff,inset -1px -1px 0 #716f64"></div>
    <div class="abs dith" style="left:786px;top:553px;width:397px;height:16px"></div>
    <div class="abs cb" style="left:786px;top:553px"><svg width="17" height="16" viewBox="0 0 17 16"><path d="M10 4V11L6 7.500Z" fill="#000"/></svg></div>
    <div class="abs cb" style="left:1166px;top:553px"><svg width="17" height="16" viewBox="0 0 17 16"><path d="M7 4V11L11 7.500Z" fill="#000"/></svg></div>
    <div class="abs cb" style="left:977px;top:553px;width:16px"></div>
    <div class="abs" id="canvas" style="left:6px;top:32px;width:1178px;height:520px;background:#fff;overflow:hidden">
      <!-- canvas origin in page coords = (2+62+6, 112+32) = (70,144) -->
      <svg id="dwg" style="left:-70px;top:-144px" width="1280" height="800" viewBox="0 0 1280 800" shape-rendering="crispEdges" fill="none" stroke="#000" stroke-width="1">
        <path d="M658.500 180V272.500M658.500 322V407M657 407.500H660"/>
        <path d="M320 404.500H480M572 404.500H659"/>
        <path stroke="none" fill="#000" d="M631 179h55v1h-55zM616 180h15v1h-15zM686 180h15v1h-15zM606 181h10v1h-10zM701 181h10v1h-10zM597 182h9v1h-9zM711 182h9v1h-9zM590 183h7v1h-7zM720 183h7v1h-7zM583 184h7v1h-7zM727 184h7v1h-7zM576 185h7v1h-7zM734 185h7v1h-7zM571 186h5v1h-5zM741 186h5v1h-5zM565 187h6v1h-6zM746 187h6v1h-6zM560 188h5v1h-5zM752 188h5v1h-5zM555 189h5v1h-5zM757 189h5v1h-5zM551 190h4v1h-4zM762 190h4v1h-4zM547 191h4v1h-4zM766 191h4v1h-4zM542 192h5v1h-5zM770 192h5v1h-5zM538 193h4v1h-4zM775 193h4v1h-4zM534 194h4v1h-4zM779 194h4v1h-4zM531 195h3v1h-3zM783 195h3v1h-3zM527 196h4v1h-4zM786 196h4v1h-4zM524 197h3v1h-3zM790 197h3v1h-3zM520 198h4v1h-4zM793 198h4v1h-4zM517 199h3v1h-3zM797 199h3v1h-3zM514 200h3v1h-3zM800 200h3v1h-3zM511 201h3v1h-3zM803 201h3v1h-3zM508 202h3v1h-3zM806 202h3v1h-3zM505 203h3v1h-3zM809 203h3v1h-3zM502 204h3v1h-3zM812 204h3v1h-3zM499 205h3v1h-3zM815 205h3v1h-3zM496 206h3v1h-3zM818 206h3v1h-3zM493 207h3v1h-3zM821 207h3v1h-3zM491 208h2v1h-2zM824 208h2v1h-2zM488 209h3v1h-3zM826 209h3v1h-3zM486 210h2v1h-2zM829 210h2v1h-2zM483 211h3v1h-3zM831 211h3v1h-3zM481 212h2v1h-2zM834 212h2v1h-2zM478 213h3v1h-3zM836 213h3v1h-3zM476 214h2v1h-2zM839 214h2v1h-2zM474 215h2v1h-2zM841 215h2v1h-2zM471 216h3v1h-3zM843 216h3v1h-3zM469 217h2v1h-2zM846 217h2v1h-2zM467 218h2v1h-2zM848 218h2v1h-2zM465 219h2v1h-2zM850 219h2v1h-2zM463 220h2v1h-2zM852 220h2v1h-2zM461 221h2v1h-2zM854 221h2v1h-2zM459 222h2v1h-2zM856 222h2v1h-2zM457 223h2v1h-2zM858 223h2v1h-2zM455 224h2v1h-2zM860 224h2v1h-2zM453 225h2v1h-2zM862 225h2v1h-2zM451 226h2v1h-2zM864 226h2v1h-2zM449 227h2v1h-2zM866 227h2v1h-2zM447 228h2v1h-2zM868 228h2v1h-2zM445 229h2v1h-2zM870 229h2v1h-2zM443 230h2v1h-2zM872 230h2v1h-2zM441 231h2v1h-2zM874 231h2v1h-2zM438 233h2v1h-2zM877 233h2v1h-2zM436 234h2v1h-2zM879 234h2v1h-2zM434 235h2v1h-2zM881 235h2v1h-2zM431 237h2v1h-2zM884 237h2v1h-2zM429 238h2v1h-2zM886 238h2v1h-2zM426 240h2v1h-2zM889 240h2v1h-2zM423 242h2v1h-2zM892 242h2v1h-2zM420 244h2v1h-2zM895 244h2v1h-2zM417 246h2v1h-2zM898 246h2v1h-2zM414 248h2v1h-2zM901 248h2v1h-2zM411 250h2v1h-2zM904 250h2v1h-2zM407 253h2v1h-2zM908 253h2v1h-2zM403 256h2v1h-2zM912 256h2v1h-2zM399 259h2v1h-2zM916 259h2v1h-2zM393 264h2v1h-2zM922 264h2v1h-2zM385 271h2v1h-2zM930 271h2v1h-2zM674 278h14v1h-14zM712 278h7v1h-7zM681 297h7v1h-7zM674 316h14v1h-14zM712 316h7v1h-7zM513 415h26v1h-26zM493 416h2v1h-2zM513 428h20v1h-20zM475 440h27v1h-27zM519 453h14v1h-14zM385 537h2v1h-2zM930 537h2v1h-2zM393 544h2v1h-2zM922 544h2v1h-2zM399 549h2v1h-2zM916 549h2v1h-2zM403 552h2v1h-2zM912 552h2v1h-2zM407 555h2v1h-2zM908 555h2v1h-2zM411 558h2v1h-2zM904 558h2v1h-2zM414 560h2v1h-2zM901 560h2v1h-2zM417 562h2v1h-2zM898 562h2v1h-2zM420 564h2v1h-2zM895 564h2v1h-2zM423 566h2v1h-2zM892 566h2v1h-2zM426 568h2v1h-2zM889 568h2v1h-2zM429 570h2v1h-2zM886 570h2v1h-2zM431 571h2v1h-2zM884 571h2v1h-2zM434 573h2v1h-2zM881 573h2v1h-2zM436 574h2v1h-2zM879 574h2v1h-2zM438 575h2v1h-2zM877 575h2v1h-2zM441 577h2v1h-2zM874 577h2v1h-2zM443 578h2v1h-2zM872 578h2v1h-2zM445 579h2v1h-2zM870 579h2v1h-2zM447 580h2v1h-2zM868 580h2v1h-2zM449 581h2v1h-2zM866 581h2v1h-2zM451 582h2v1h-2zM864 582h2v1h-2zM453 583h2v1h-2zM862 583h2v1h-2zM455 584h2v1h-2zM860 584h2v1h-2zM457 585h2v1h-2zM858 585h2v1h-2zM459 586h2v1h-2zM856 586h2v1h-2zM461 587h2v1h-2zM854 587h2v1h-2zM463 588h2v1h-2zM852 588h2v1h-2zM465 589h2v1h-2zM850 589h2v1h-2zM467 590h2v1h-2zM848 590h2v1h-2zM469 591h2v1h-2zM846 591h2v1h-2zM471 592h3v1h-3zM843 592h3v1h-3zM474 593h2v1h-2zM841 593h2v1h-2zM476 594h2v1h-2zM839 594h2v1h-2zM478 595h3v1h-3zM836 595h3v1h-3zM481 596h2v1h-2zM834 596h2v1h-2zM483 597h3v1h-3zM831 597h3v1h-3zM486 598h2v1h-2zM829 598h2v1h-2zM488 599h3v1h-3zM826 599h3v1h-3zM491 600h2v1h-2zM824 600h2v1h-2zM493 601h3v1h-3zM821 601h3v1h-3zM496 602h3v1h-3zM818 602h3v1h-3zM499 603h3v1h-3zM815 603h3v1h-3zM502 604h3v1h-3zM812 604h3v1h-3zM505 605h3v1h-3zM809 605h3v1h-3zM508 606h3v1h-3zM806 606h3v1h-3zM511 607h3v1h-3zM803 607h3v1h-3zM514 608h3v1h-3zM800 608h3v1h-3zM517 609h3v1h-3zM797 609h3v1h-3zM520 610h4v1h-4zM793 610h4v1h-4zM524 611h3v1h-3zM790 611h3v1h-3zM527 612h4v1h-4zM786 612h4v1h-4zM531 613h3v1h-3zM783 613h3v1h-3zM534 614h4v1h-4zM779 614h4v1h-4zM538 615h4v1h-4zM775 615h4v1h-4zM542 616h5v1h-5zM770 616h5v1h-5zM547 617h4v1h-4zM766 617h4v1h-4zM551 618h4v1h-4zM762 618h4v1h-4zM555 619h5v1h-5zM757 619h5v1h-5zM560 620h5v1h-5zM752 620h5v1h-5zM565 621h6v1h-6zM746 621h6v1h-6zM571 622h5v1h-5zM741 622h5v1h-5zM576 623h7v1h-7zM734 623h7v1h-7zM583 624h7v1h-7zM727 624h7v1h-7zM590 625h7v1h-7zM720 625h7v1h-7zM597 626h9v1h-9zM711 626h9v1h-9zM606 627h10v1h-10zM701 627h10v1h-10zM616 628h15v1h-15zM686 628h15v1h-15zM631 629h55v1h-55zM320 398h1v13h-1zM321 386h1v12h-1zM321 411h1v12h-1zM322 379h1v7h-1zM322 423h1v7h-1zM323 374h1v5h-1zM323 430h1v5h-1zM324 369h1v5h-1zM324 435h1v5h-1zM325 365h1v4h-1zM325 440h1v4h-1zM326 362h1v3h-1zM326 444h1v3h-1zM327 358h1v4h-1zM327 447h1v4h-1zM328 355h1v3h-1zM328 451h1v3h-1zM329 352h1v3h-1zM329 454h1v3h-1zM330 350h1v2h-1zM330 457h1v2h-1zM331 347h1v3h-1zM331 459h1v3h-1zM332 345h1v2h-1zM332 462h1v2h-1zM333 342h1v3h-1zM333 464h1v3h-1zM334 340h1v2h-1zM334 467h1v2h-1zM335 338h1v2h-1zM335 469h1v2h-1zM336 336h1v2h-1zM336 471h1v2h-1zM337 334h1v2h-1zM337 473h1v2h-1zM338 332h1v2h-1zM338 475h1v2h-1zM339 330h1v2h-1zM339 477h1v2h-1zM340 328h1v2h-1zM340 479h1v2h-1zM341 326h1v2h-1zM341 481h1v2h-1zM342 324h1v2h-1zM342 483h1v2h-1zM343 323h1v1h-1zM343 485h1v1h-1zM344 321h1v2h-1zM344 486h1v2h-1zM345 319h1v2h-1zM345 488h1v2h-1zM346 318h1v1h-1zM346 490h1v1h-1zM347 316h1v2h-1zM347 491h1v2h-1zM348 314h1v2h-1zM348 493h1v2h-1zM349 313h1v1h-1zM349 495h1v1h-1zM350 311h1v2h-1zM350 496h1v2h-1zM351 310h1v1h-1zM351 498h1v1h-1zM352 309h1v1h-1zM352 499h1v1h-1zM353 307h1v2h-1zM353 500h1v2h-1zM354 306h1v1h-1zM354 502h1v1h-1zM355 304h1v2h-1zM355 503h1v2h-1zM356 303h1v1h-1zM356 505h1v1h-1zM357 302h1v1h-1zM357 506h1v1h-1zM358 301h1v1h-1zM358 507h1v1h-1zM359 299h1v2h-1zM359 508h1v2h-1zM360 298h1v1h-1zM360 510h1v1h-1zM361 297h1v1h-1zM361 511h1v1h-1zM362 296h1v1h-1zM362 512h1v1h-1zM363 294h1v2h-1zM363 513h1v2h-1zM364 293h1v1h-1zM364 515h1v1h-1zM365 292h1v1h-1zM365 516h1v1h-1zM366 291h1v1h-1zM366 517h1v1h-1zM367 290h1v1h-1zM367 518h1v1h-1zM368 289h1v1h-1zM368 519h1v1h-1zM369 287h1v2h-1zM369 520h1v2h-1zM370 286h1v1h-1zM370 522h1v1h-1zM371 285h1v1h-1zM371 523h1v1h-1zM372 284h1v1h-1zM372 524h1v1h-1zM373 283h1v1h-1zM373 525h1v1h-1zM374 282h1v1h-1zM374 526h1v1h-1zM375 281h1v1h-1zM375 527h1v1h-1zM376 280h1v1h-1zM376 528h1v1h-1zM377 279h1v1h-1zM377 529h1v1h-1zM378 278h1v1h-1zM378 530h1v1h-1zM379 277h1v1h-1zM379 531h1v1h-1zM380 276h1v1h-1zM380 532h1v1h-1zM381 275h1v1h-1zM381 533h1v1h-1zM382 274h1v1h-1zM382 534h1v1h-1zM383 273h1v1h-1zM383 535h1v1h-1zM384 272h1v1h-1zM384 536h1v1h-1zM387 270h1v1h-1zM387 538h1v1h-1zM388 269h1v1h-1zM388 539h1v1h-1zM389 268h1v1h-1zM389 540h1v1h-1zM390 267h1v1h-1zM390 541h1v1h-1zM391 266h1v1h-1zM391 542h1v1h-1zM392 265h1v1h-1zM392 543h1v1h-1zM395 263h1v1h-1zM395 545h1v1h-1zM396 262h1v1h-1zM396 546h1v1h-1zM397 261h1v1h-1zM397 547h1v1h-1zM398 260h1v1h-1zM398 548h1v1h-1zM401 258h1v1h-1zM401 550h1v1h-1zM402 257h1v1h-1zM402 551h1v1h-1zM405 255h1v1h-1zM405 553h1v1h-1zM406 254h1v1h-1zM406 554h1v1h-1zM409 252h1v1h-1zM409 556h1v1h-1zM410 251h1v1h-1zM410 557h1v1h-1zM413 249h1v1h-1zM413 559h1v1h-1zM416 247h1v1h-1zM416 561h1v1h-1zM419 245h1v1h-1zM419 563h1v1h-1zM422 243h1v1h-1zM422 565h1v1h-1zM425 241h1v1h-1zM425 567h1v1h-1zM428 239h1v1h-1zM428 569h1v1h-1zM433 236h1v1h-1zM433 572h1v1h-1zM440 232h1v1h-1zM440 576h1v1h-1zM476 439h1v1h-1zM477 437h1v2h-1zM478 436h1v1h-1zM479 435h1v1h-1zM480 433h1v2h-1zM481 432h1v1h-1zM482 431h1v1h-1zM483 429h1v2h-1zM484 428h1v1h-1zM485 427h1v1h-1zM486 425h1v2h-1zM487 424h1v1h-1zM488 423h1v1h-1zM489 421h1v2h-1zM490 420h1v1h-1zM491 419h1v1h-1zM492 417h1v2h-1zM494 415h1v1h-1zM494 417h1v23h-1zM494 441h1v13h-1zM513 416h1v12h-1zM513 446h1v1h-1zM514 447h1v1h-1zM515 448h1v1h-1zM516 449h1v2h-1zM517 451h1v1h-1zM518 452h1v1h-1zM533 429h1v1h-1zM533 452h1v1h-1zM534 430h1v1h-1zM534 451h1v1h-1zM535 431h1v1h-1zM535 449h1v2h-1zM536 432h1v1h-1zM536 448h1v1h-1zM537 433h1v1h-1zM537 447h1v1h-1zM538 434h1v13h-1zM550 428h1v1h-1zM551 426h1v2h-1zM552 424h1v2h-1zM553 422h1v2h-1zM554 420h1v2h-1zM555 418h1v2h-1zM556 416h1v2h-1zM557 415h1v1h-1zM557 427h1v2h-1zM558 425h1v2h-1zM559 423h1v2h-1zM560 421h1v2h-1zM561 419h1v2h-1zM562 417h1v2h-1zM563 415h1v2h-1zM668 285h1v1h-1zM668 310h1v1h-1zM669 284h1v1h-1zM669 311h1v1h-1zM670 283h1v1h-1zM670 312h1v1h-1zM671 281h1v2h-1zM671 313h1v1h-1zM672 280h1v1h-1zM672 314h1v1h-1zM673 279h1v1h-1zM673 315h1v1h-1zM688 279h1v1h-1zM688 296h1v1h-1zM688 298h1v1h-1zM688 315h1v1h-1zM689 280h1v1h-1zM689 295h1v1h-1zM689 299h1v1h-1zM689 314h1v1h-1zM690 281h1v2h-1zM690 294h1v1h-1zM690 300h1v1h-1zM690 313h1v1h-1zM691 283h1v1h-1zM691 293h1v1h-1zM691 301h1v1h-1zM691 312h1v1h-1zM692 284h1v1h-1zM692 292h1v1h-1zM692 302h1v1h-1zM692 311h1v1h-1zM693 285h1v7h-1zM693 303h1v8h-1zM706 285h1v26h-1zM707 284h1v1h-1zM707 311h1v1h-1zM708 283h1v1h-1zM708 312h1v1h-1zM709 281h1v2h-1zM709 313h1v1h-1zM710 280h1v1h-1zM710 314h1v1h-1zM711 279h1v1h-1zM711 315h1v1h-1zM719 279h1v1h-1zM719 315h1v1h-1zM720 280h1v1h-1zM720 314h1v1h-1zM721 281h1v2h-1zM721 313h1v1h-1zM722 283h1v1h-1zM722 312h1v1h-1zM723 284h1v1h-1zM723 311h1v1h-1zM724 285h1v26h-1zM737 290h1v2h-1zM738 288h1v2h-1zM739 286h1v2h-1zM740 284h1v2h-1zM741 282h1v2h-1zM742 280h1v2h-1zM743 278h1v2h-1zM743 290h1v2h-1zM744 288h1v2h-1zM745 286h1v2h-1zM746 284h1v2h-1zM747 282h1v2h-1zM748 280h1v2h-1zM749 278h1v2h-1zM876 232h1v1h-1zM876 576h1v1h-1zM883 236h1v1h-1zM883 572h1v1h-1zM888 239h1v1h-1zM888 569h1v1h-1zM891 241h1v1h-1zM891 567h1v1h-1zM894 243h1v1h-1zM894 565h1v1h-1zM897 245h1v1h-1zM897 563h1v1h-1zM900 247h1v1h-1zM900 561h1v1h-1zM903 249h1v1h-1zM903 559h1v1h-1zM906 251h1v1h-1zM906 557h1v1h-1zM907 252h1v1h-1zM907 556h1v1h-1zM910 254h1v1h-1zM910 554h1v1h-1zM911 255h1v1h-1zM911 553h1v1h-1zM914 257h1v1h-1zM914 551h1v1h-1zM915 258h1v1h-1zM915 550h1v1h-1zM918 260h1v1h-1zM918 548h1v1h-1zM919 261h1v1h-1zM919 547h1v1h-1zM920 262h1v1h-1zM920 546h1v1h-1zM921 263h1v1h-1zM921 545h1v1h-1zM924 265h1v1h-1zM924 543h1v1h-1zM925 266h1v1h-1zM925 542h1v1h-1zM926 267h1v1h-1zM926 541h1v1h-1zM927 268h1v1h-1zM927 540h1v1h-1zM928 269h1v1h-1zM928 539h1v1h-1zM929 270h1v1h-1zM929 538h1v1h-1zM932 272h1v1h-1zM932 536h1v1h-1zM933 273h1v1h-1zM933 535h1v1h-1zM934 274h1v1h-1zM934 534h1v1h-1zM935 275h1v1h-1zM935 533h1v1h-1zM936 276h1v1h-1zM936 532h1v1h-1zM937 277h1v1h-1zM937 531h1v1h-1zM938 278h1v1h-1zM938 530h1v1h-1zM939 279h1v1h-1zM939 529h1v1h-1zM940 280h1v1h-1zM940 528h1v1h-1zM941 281h1v1h-1zM941 527h1v1h-1zM942 282h1v1h-1zM942 526h1v1h-1zM943 283h1v1h-1zM943 525h1v1h-1zM944 284h1v1h-1zM944 524h1v1h-1zM945 285h1v1h-1zM945 523h1v1h-1zM946 286h1v1h-1zM946 522h1v1h-1zM947 287h1v2h-1zM947 520h1v2h-1zM948 289h1v1h-1zM948 519h1v1h-1zM949 290h1v1h-1zM949 518h1v1h-1zM950 291h1v1h-1zM950 517h1v1h-1zM951 292h1v1h-1zM951 516h1v1h-1zM952 293h1v1h-1zM952 515h1v1h-1zM953 294h1v2h-1zM953 513h1v2h-1zM954 296h1v1h-1zM954 512h1v1h-1zM955 297h1v1h-1zM955 511h1v1h-1zM956 298h1v1h-1zM956 510h1v1h-1zM957 299h1v2h-1zM957 508h1v2h-1zM958 301h1v1h-1zM958 507h1v1h-1zM959 302h1v1h-1zM959 506h1v1h-1zM960 303h1v1h-1zM960 505h1v1h-1zM961 304h1v2h-1zM961 503h1v2h-1zM962 306h1v1h-1zM962 502h1v1h-1zM963 307h1v2h-1zM963 500h1v2h-1zM964 309h1v1h-1zM964 499h1v1h-1zM965 310h1v1h-1zM965 498h1v1h-1zM966 311h1v2h-1zM966 496h1v2h-1zM967 313h1v1h-1zM967 495h1v1h-1zM968 314h1v2h-1zM968 493h1v2h-1zM969 316h1v2h-1zM969 491h1v2h-1zM970 318h1v1h-1zM970 490h1v1h-1zM971 319h1v2h-1zM971 488h1v2h-1zM972 321h1v2h-1zM972 486h1v2h-1zM973 323h1v1h-1zM973 485h1v1h-1zM974 324h1v2h-1zM974 483h1v2h-1zM975 326h1v2h-1zM975 481h1v2h-1zM976 328h1v2h-1zM976 479h1v2h-1zM977 330h1v2h-1zM977 477h1v2h-1zM978 332h1v2h-1zM978 475h1v2h-1zM979 334h1v2h-1zM979 473h1v2h-1zM980 336h1v2h-1zM980 471h1v2h-1zM981 338h1v2h-1zM981 469h1v2h-1zM982 340h1v2h-1zM982 467h1v2h-1zM983 342h1v3h-1zM983 464h1v3h-1zM984 345h1v2h-1zM984 462h1v2h-1zM985 347h1v3h-1zM985 459h1v3h-1zM986 350h1v2h-1zM986 457h1v2h-1zM987 352h1v3h-1zM987 454h1v3h-1zM988 355h1v3h-1zM988 451h1v3h-1zM989 358h1v4h-1zM989 447h1v4h-1zM990 362h1v3h-1zM990 444h1v3h-1zM991 365h1v4h-1zM991 440h1v4h-1zM992 369h1v5h-1zM992 435h1v5h-1zM993 374h1v5h-1zM993 430h1v5h-1zM994 379h1v7h-1zM994 423h1v7h-1zM995 386h1v12h-1zM995 411h1v12h-1zM996 398h1v13h-1z"/>
        <rect x="629" y="532" width="1" height="1" fill="#000" stroke="none"/>
        <!-- crosshair -->
        <path d="M261 177.500H325M293.500 146V210"/>
        <rect x="290.500" y="174.500" width="6" height="6" fill="#fff"/>
        <path stroke="none" fill="#000" d="M291 175h1v1h-1zM292 176h1v1h-1zM293 177h1v1h-1zM294 178h1v1h-1zM295 179h1v1h-1zM295 175h1v1h-1zM294 176h1v1h-1zM292 178h1v1h-1zM291 179h1v1h-1z"/>
      </svg>
    </div>
  </div>


  <!-- docked command window separators (page y 689..700) -->
  <div class="abs" style="left:4px;top:688px;width:1268px;height:82px;background:#ece9d8"></div>
  <div class="abs" style="left:4px;top:689px;width:1268px;height:2px;background:#fff"></div>
  <div class="abs" style="left:4px;top:691px;width:1268px;height:1px;background:#000"></div>
  <div class="abs" style="left:4px;top:692px;width:1268px;height:1px;background:#fff"></div>
  <div class="abs" style="left:4px;top:696px;width:1268px;height:1px;background:#000"></div>
  <div class="abs" style="left:4px;top:697px;width:1268px;height:1px;background:#fff"></div>
  <!-- command text area: page x 8..1268, y 700..745 -->
  <div class="abs" style="left:5px;top:699px;width:1263px;height:44px;background:#fff;box-shadow:inset 1px 1px 0 #716f64,inset 2px 2px 0 #000"></div>
  <div class="abs" style="left:7px;top:727px;width:1261px;height:1px;background:#8a8778"></div>
  <div class="abs" style="left:7px;top:728px;width:1175px;height:1px;background:#d8d5c8"></div>
  <div class="abs cmd" style="left:9px;top:702px">Command: *Cancel*</div>
  <div class="abs cmd" style="left:9px;top:715px">Command: *Cancel*</div>
  <div class="abs cmd" style="left:9px;top:731px">Command:</div>
  <!-- cmd scroll -->
  <div class="abs" style="left:1252px;top:701px;width:16px;height:27px;background:linear-gradient(to right,#eeede5 0,#f6f5ef 25%,#fdfdfa 60%,#fefefb 100%)"></div>
  <div class="abs xsb" style="left:1253px;top:701px;height:12px"><svg width="14" height="12" viewBox="0 0 14 12"><path d="M3.500 7.500L7 4L10.500 7.500" fill="none" stroke="#4d6185" stroke-width="2"/></svg></div>
  <div class="abs xsb" style="left:1253px;top:714px;height:12px"><svg width="14" height="12" viewBox="0 0 14 12"><path d="M3.500 3.500L7 7L10.500 3.500" fill="none" stroke="#4d6185" stroke-width="2"/></svg></div>
  <!-- cmd h-scroll page x 1186..1252 y 728..742 -->
  <div class="abs" style="left:1182px;top:728px;width:86px;height:15px;background:#ece9d8"></div>
  <div class="abs dith" style="left:1185px;top:728px;width:65px;height:14px"></div>
  <div class="abs cb" style="left:1185px;top:728px;width:16px;height:14px"><svg width="16" height="14" viewBox="0 0 16 14"><path d="M9 3.500V10.500L5 7Z" fill="#000"/></svg></div>
  <div class="abs cb" style="left:1201px;top:728px;width:16px;height:14px"></div>
  <div class="abs cb" style="left:1234px;top:728px;width:16px;height:14px"><svg width="16" height="14" viewBox="0 0 16 14"><path d="M7 3.500V10.500L11 7Z" fill="#000"/></svg></div>
  <div class="abs" style="left:4px;top:747px;width:1268px;height:1px;background:#fff"></div>
  <!-- status bar page y 751..765 -->
  <div class="abs" style="left:14px;top:751px;width:237px;height:15px;box-shadow:inset 1px 1px 0 #aca899,inset -1px -1px 0 #fff"></div>
  <div class="abs st" style="left:18px;top:752px;letter-spacing:0">-3 1/2,&nbsp;&nbsp;&nbsp;&nbsp;30 1/8&nbsp;&nbsp;&nbsp;, 0</div>
  <div class="abs sb" style="left:254px;width:34px"><i>SNAP</i></div>
  <div class="abs sb" style="left:289px;width:31px"><i>GRID</i></div>
  <div class="abs sb" style="left:322px;width:43px"><i>ORTHO</i></div>
  <div class="abs sb" style="left:367px;width:40px"><i>POLAR</i></div>
  <div class="abs sb" style="left:409px;width:41px"><i>OSNAP</i></div>
  <div class="abs sb on" style="left:452px;width:49px"><i>OTRACK</i></div>
  <div class="abs sb" style="left:502px;width:28px"><i>LWT</i></div>
  <div class="abs sb on" style="left:532px;width:44px"><i>MODEL</i></div>

  <div id="winframe" class="abs"></div>
</div>


<div id="taskbar" class="abs" style="will-change:transform;left:0;top:770px;width:1280px;height:30px;background:linear-gradient(to bottom,#1f2f86 0,#3165c4 3%,#3682e5 6%,#4490e6 10%,#3883e5 12%,#2b71e0 15%,#2663da 18%,#235bd6 20%,#2258d5 23%,#2157d6 38%,#245ddb 54%,#2562df 86%,#245fdc 89%,#2158d4 92%,#1d4ec0 95%,#1941a5 98%)">
  <div class="abs" id="start" style="left:0;top:0;width:97px;height:30px;border-radius:0 13px 13px 0/0 15px 15px 0;background:radial-gradient(ellipse 60px 16px at 45px 12px,#45a345 0,#3c963c 60%,#348a34 100%),linear-gradient(to bottom,#2f7f2f 0,#5eac56 7%,#48a048 14%,#3c943c 25%,#378f37 55%,#338833 78%,#2b7a2b 92%,#1f661f 100%);box-shadow:inset -3px 0 4px rgba(0,50,0,.45),inset 0 1px 1px rgba(255,255,255,.3),inset 0 -2px 3px rgba(0,40,0,.4),inset 2px 0 2px rgba(0,50,0,.35),1px 0 2px rgba(0,0,60,.5)"></div>
  <svg style="left:10px;top:5px" width="20" height="19" viewBox="0 0 20 19">
    <path d="M2.500 3.800Q6 .800 9.200 3L7.800 8.500Q4.800 6.500 1 9.300Z" fill="#e8572a"/>
    <path d="M10.300 3.500Q13.500 5.500 18 2.800L16.500 8.500Q12.500 11 9 9Z" fill="#7ac143"/>
    <path d="M.700 10.500Q4.200 7.800 7.500 9.800L6.200 15.500Q3 13.500 -.500 16Z" fill="#4a8df0"/>
    <path d="M8.800 10.300Q12 12.300 16.200 9.800L14.800 15.500Q11 18 7.400 16Z" fill="#f7c423"/>
  </svg>
  <div class="abs" style="left:35px;top:4px;color:#fff;font-size:19px;font-weight:bold;font-style:italic;letter-spacing:-.5px;transform:scaleX(.95);transform-origin:0 0;text-shadow:1px 1px 2px rgba(0,0,0,.6)">start</div>
  <div class="abs tk" style="left:108px"><svg style="left:8px;top:3px" width="16" height="16" viewBox="0 0 16 16"><rect x=".800" y=".800" width="11" height="11" rx="2" fill="#f8e8d0" stroke="#e8902a" stroke-width="1.400"/><circle cx="9.500" cy="9.500" r="5.500" fill="#fbd36a" stroke="#d08a20" stroke-width=".800"/><circle cx="9" cy="8.500" r="3.500" fill="#fde9a8"/><path d="M6.500 8L9.500 11L12.500 8" fill="none" stroke="#8a5a10" stroke-width="1.200"/></svg><span style="transform:scaleX(1.01)">Inbox - Microsoft Ou...</span></div>
  <div class="abs tk" style="left:264px"><svg style="left:9px;top:3px" width="16" height="16" viewBox="0 0 16 16"><path d="M3.500 .500H12L15.500 4V15.500H3.500Z" fill="#fff" stroke="#8a9ab8" stroke-width=".800"/><path d="M5 9.500H14M5 11.500H14M5 13.500H12" stroke="#b0b8c8" stroke-width=".800"/><rect x="0" y="2.500" width="9" height="7" fill="#2b4fa8"/><text x="4.500" y="8.500" font-family="Liberation Sans" font-size="7" font-weight="bold" fill="#fff" text-anchor="middle">W</text></svg><span style="transform:scaleX(.95)">Ceiling elipse MH - Mi...</span></div>
  <div class="abs tk" style="left:421px"><svg style="left:9px;top:3px" width="16" height="16" viewBox="0 0 16 16"><path d="M.500 15.500V5Q.500 .500 8 .500Q15.500 .500 15.500 5V15.500Z" fill="#f0a818" stroke="#5a3000" stroke-width="1"/><circle cx="7" cy="4" r="1.800" fill="#ffe070" stroke="#7a3000" stroke-width=".600"/><path d="M7 6L5 10L7 11L5.500 14.500M7 7L11 5.500M7 11L10.500 12V14.500" fill="none" stroke="#a02000" stroke-width="1.500"/><rect x="10.500" y="10" width="4" height="4.500" fill="#c04010"/><rect x="1.500" y="8" width="2.500" height="3" fill="#40a040"/></svg><span style="transform:scaleX(.97)">William F. Hillman Car...</span></div>
  <div class="abs tk" style="left:578px"><svg style="left:9px;top:3px" width="16" height="16" viewBox="0 0 16 16"><circle cx="8" cy="8" r="6.800" fill="#2a5fd8" stroke="#fff" stroke-width="1.800"/><text x="8" y="12" font-family="Liberation Sans" font-size="11" font-weight="bold" fill="#fff" text-anchor="middle">?</text></svg><span style="transform:scaleX(.97)">Word Help</span></div>
  <div class="abs tk act" style="left:735px"><svg style="left:10px;top:3px" width="16" height="16" viewBox="0 0 16 16">
    <path d="M6 .500H10.500L11 3.500L12 4V8L12.500 8.500V14.500H9V11H6.500L5.500 14.500H1.500L2.500 9.500L4 6Z" fill="#f00"/>
    <path d="M1.500 13.500H5.500V15H1.500ZM9 13.500H13V15H9ZM12.500 10V14H13.500V10ZM10.500 .500H11.500V2.500H10.500ZM10.500 3.500H12.500V6H10.500Z" fill="#000"/>
    <path d="M4 8.500H15" stroke="#000" stroke-width="1"/>
    <path d="M.500 8.500Q0 11.500 3 11.500Q5 11.500 6.500 10.500Q9 9.500 10.500 9Q13 6.500 14.500 4.500L13.500 3.500" fill="none" stroke="#fff" stroke-width="1.100"/>
    <rect x="10" y="7" width="3.500" height="3.500" fill="#b00000" stroke="#ff0" stroke-width="1.200"/></svg><span style="transform:scaleX(.955)">AutoCAD 2000</span></div>
  <div class="abs tk" style="left:892px"><svg style="left:9px;top:3px" width="16" height="16" viewBox="0 0 16 16"><rect x=".500" y="1" width="14" height="14" rx="2.500" fill="#fff" stroke="#c8d0e0" stroke-width=".600"/><path d="M2 2Q8 2 11.500 8Q13 11 12 13.500Q7 13 4.500 9Q2.500 5.500 2 2Z" fill="#2a78c8"/><path d="M4 5Q8 7 11.500 13" fill="none" stroke="#1a9a5a" stroke-width="1.600"/><path d="M2.500 2.500Q7 6 12 13.500" fill="none" stroke="#bfe0ff" stroke-width=".700"/></svg><span style="transform:scaleX(.96)">Adobe Photoshop</span></div>
  <!-- tray -->
  <div class="abs" style="left:1061px;top:0;width:219px;height:30px;background:linear-gradient(to bottom,#0c59b9 0,#139ee9 6%,#18b5f2 10%,#139beb 14%,#1290e8 19%,#0d8dea 63%,#0d9ff1 81%,#0f9eed 88%,#119be9 91%,#1392e2 94%,#137ed7 97%,#095bc9 100%);box-shadow:inset 1px 0 0 #0a3e9a,inset 2px 0 0 #3ab0f0"></div>
  <div class="abs" style="left:1052px;top:6px;width:19px;height:19px;border-radius:50%;background:radial-gradient(circle at 35% 30%,#7ab8ff 0,#2a78e8 45%,#0f4fc0 100%);box-shadow:0 0 0 1px rgba(255,255,255,.55),1px 1px 2px rgba(0,0,60,.5)"></div>
  <svg style="left:1052px;top:6px" width="19" height="19" viewBox="0 0 19 19"><path d="M11.500 5L7 9.500L11.500 14" fill="none" stroke="#fff" stroke-width="2.400"/></svg>
  <svg style="left:1073px;top:7px" width="145" height="18" viewBox="0 0 145 18">
    <!-- envelope x 1073-1086 -->
    <rect x=".500" y="3.500" width="12.500" height="9" fill="#f6d878" stroke="#c89820" stroke-width="1"/><path d="M.500 3.500L6.800 9L13 3.500M.500 12.500L5 8M13 12.500L8.500 8" fill="none" stroke="#b88a18" stroke-width=".900"/>
    <!-- network 1090-1106 -->
    <rect x="18" y="3" width="8" height="6.500" fill="#5a6a9a" stroke="#c8d0e8" stroke-width="1"/><rect x="19.500" y="10.500" width="5" height="2" fill="#9098b8"/><rect x="17" y="13" width="10" height="1.500" fill="#c0c4d4"/>
    <path d="M28 5Q29.500 7 28 9M30 3.500Q32.500 7 30 10.500M32 2Q35.500 7 32 12" fill="none" stroke="#e0e6f4" stroke-width="1"/>
    <!-- signal bars 1108-1124 -->
    <path d="M35 16H51V15H35Z" fill="#000"/>
    <rect x="35.500" y="12" width="3" height="4" fill="#10e010" stroke="#003000" stroke-width=".700"/><rect x="39.500" y="9" width="3" height="7" fill="#10e010" stroke="#003000" stroke-width=".700"/><rect x="43.500" y="5.500" width="3" height="10.500" fill="#10e010" stroke="#003000" stroke-width=".700"/><rect x="47.500" y="2" width="3" height="14" fill="#10e010" stroke="#003000" stroke-width=".700"/>
    <!-- blue i + gray box 1125-1142 -->
    <rect x="53" y="6" width="2" height="10" fill="#1030c0"/><circle cx="54" cy="3.500" r="1.300" fill="#1030c0"/>
    <rect x="56.500" y="8.500" width="11.500" height="7" fill="#b8b8b8" stroke="#5a68a8" stroke-width="1"/>
    <!-- google swirl 1144-1159 -->
    <path d="M78.500 2A6.500 6.500 0 0 0 72 8.500" fill="none" stroke="#e8c010" stroke-width="2.600"/><path d="M72 8.500A6.500 6.500 0 0 0 78.500 15" fill="none" stroke="#18a038" stroke-width="2.600"/><path d="M78.500 15A6.500 6.500 0 0 0 85 8.500" fill="none" stroke="#2860d8" stroke-width="2.600"/><path d="M85 8.500A6.500 6.500 0 0 0 78.500 2" fill="none" stroke="#e03020" stroke-width="2.600"/><path d="M75.500 8.500A3 3 0 0 1 81.500 8.500" fill="none" stroke="#e03020" stroke-width="1.600"/><path d="M81.500 8.500A3 3 0 0 1 75.500 8.500" fill="none" stroke="#2860d8" stroke-width="1.600"/>
    <!-- outlook 1162-1176 -->
    <rect x="89.500" y="1" width="11" height="11" rx="2" fill="#f8e8d0" stroke="#e8902a" stroke-width="1.400"/><circle cx="97.500" cy="10" r="5.500" fill="#fbd36a" stroke="#d08a20" stroke-width=".800"/><circle cx="97" cy="9" r="3.500" fill="#fde9a8"/><path d="M94.500 8.500L97.500 11.500L100.500 8.500" fill="none" stroke="#8a5a10" stroke-width="1.200"/>
    <!-- speaker 1180-1195 -->
    <ellipse cx="113" cy="7.500" rx="5" ry="6" fill="#707070" stroke="#c8c8c8" stroke-width="1"/><ellipse cx="112.500" cy="7" rx="2.500" ry="3.200" fill="#303030"/><ellipse cx="111.500" cy="6" rx="1" ry="1.300" fill="#d0d0d0"/><path d="M116 14Q119 13 121 9M118 15.500Q121 14 122.500 11" fill="none" stroke="#7a9ae8" stroke-width=".900"/>
    <!-- monitor 1199-1213 -->
    <rect x="126.500" y="1.500" width="13" height="10.500" fill="#b8b8b8" stroke="#1a2a7a" stroke-width="1.300"/><rect x="126" y="13" width="14" height="3.500" fill="#e8e8e8" stroke="#1a2a7a" stroke-width="1"/><path d="M128 14.800H132M134 14.800H138" stroke="#1a2a7a" stroke-width="1"/>
  </svg>
  <div class="abs" style="left:1223px;top:9px;color:#fff;font-size:11px;white-space:nowrap;transform:scaleX(1.07);transform-origin:0 0">6:28 AM</div>
</div>
</body>
</html>
